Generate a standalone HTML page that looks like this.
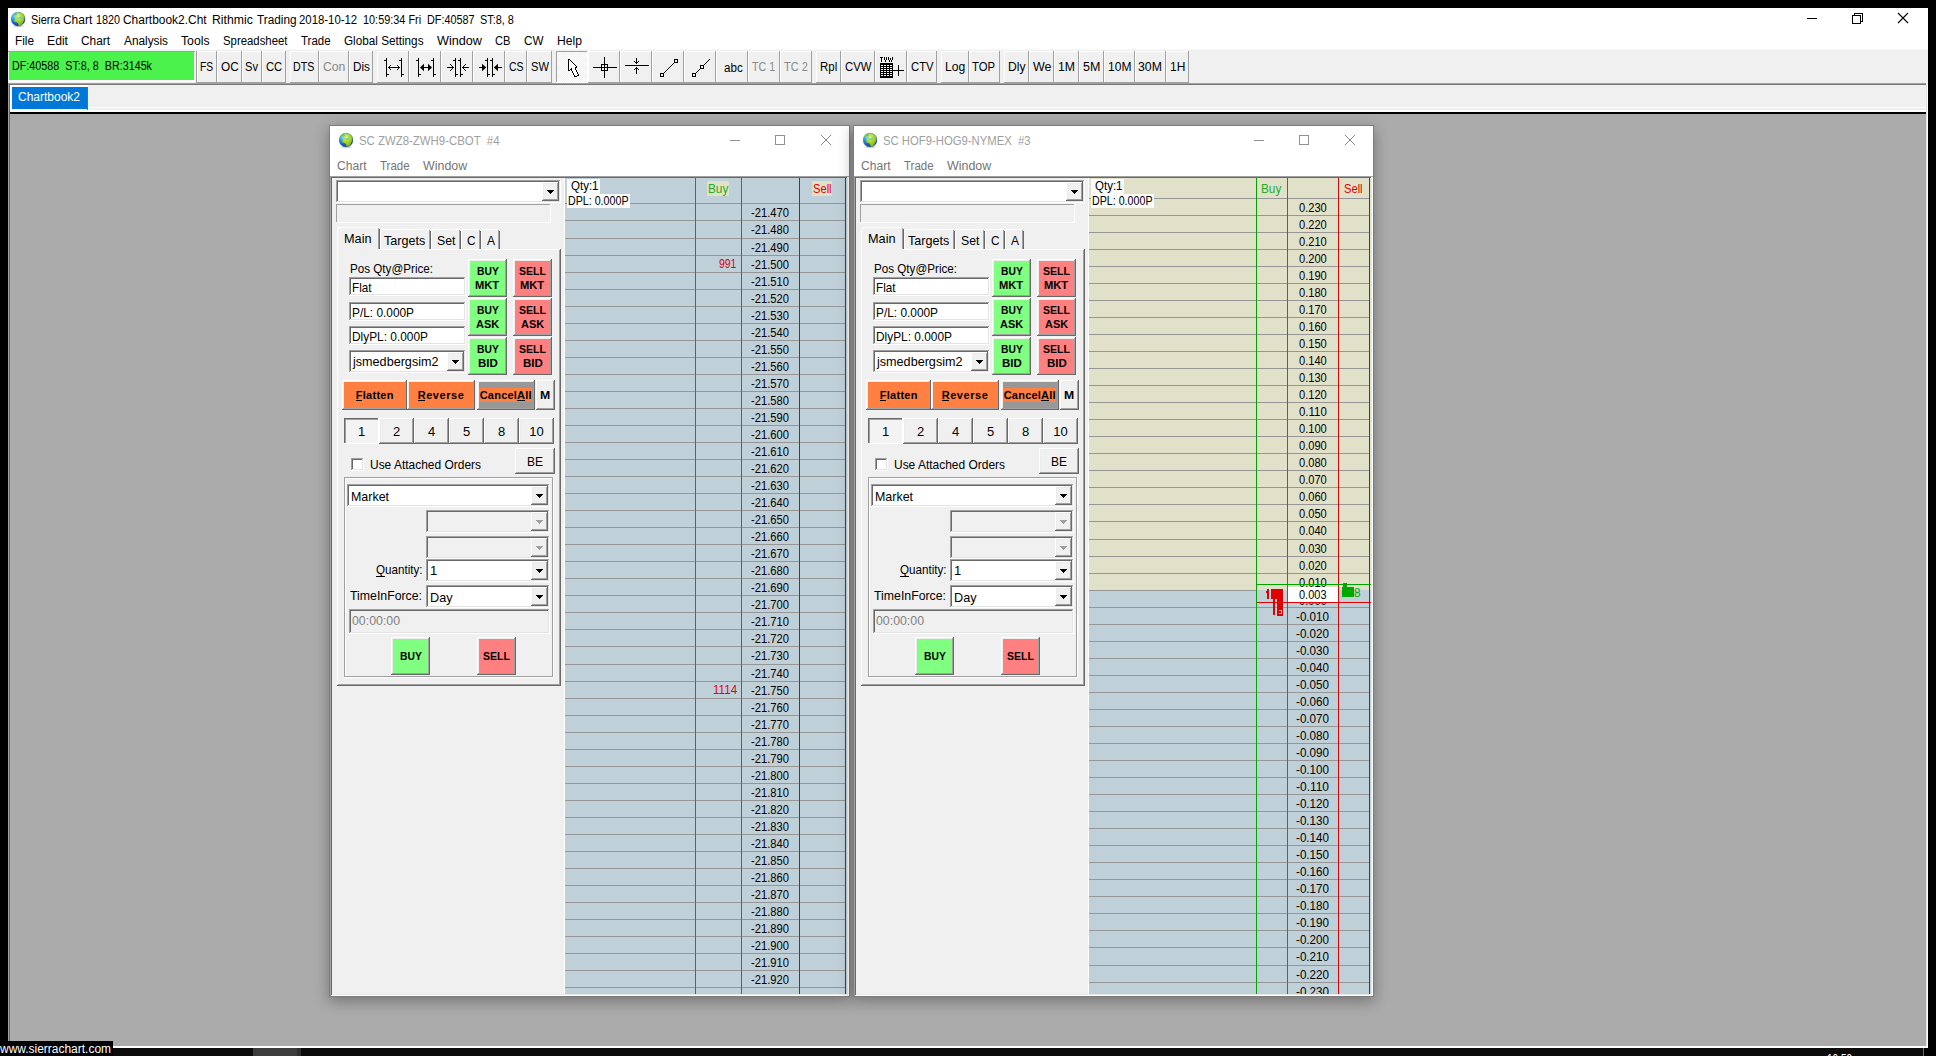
<!DOCTYPE html>
<html><head><meta charset="utf-8"><title>Sierra Chart</title>
<style>
html,body{margin:0;padding:0;}
body{width:1936px;height:1056px;background:#000;overflow:hidden;position:relative;font-family:"Liberation Sans",sans-serif;}
div,span.t,svg{position:absolute;}
span.t{white-space:nowrap;transform-origin:0 50%;line-height:normal;}
</style></head><body>
<div style="left:8px;top:8px;width:1920px;height:41px;background:#fff;"></div>
<div style="left:8px;top:49px;width:1920px;height:63px;background:#f0f0f0;"></div>
<div style="left:8px;top:49px;width:1920px;height:1px;background:#f7f7f7;"></div>
<div style="left:8px;top:83px;width:1918px;height:1px;background:#a0a0a0;"></div>
<div style="left:8px;top:84px;width:1918px;height:1px;background:#787878;"></div>
<div style="left:8px;top:107px;width:1920px;height:1px;background:#fff;"></div>
<div style="left:8px;top:110px;width:1920px;height:2px;background:#fff;"></div>
<div style="left:8px;top:112px;width:1920px;height:2px;background:#000;"></div>
<div style="left:8px;top:114px;width:1920px;height:932px;background:#ababab;"></div>
<div style="left:8px;top:83px;width:1px;height:963px;background:#a0a0a0;"></div>
<div style="left:9px;top:84px;width:1px;height:962px;background:#696969;"></div>
<div style="left:1926px;top:85px;width:1px;height:961px;background:#e3e3e3;"></div>
<div style="left:1927px;top:85px;width:1px;height:961px;background:#fff;"></div>
<div style="left:8px;top:1046px;width:1920px;height:2px;background:#fff;"></div>
<div style="left:0px;top:1048px;width:1923px;height:8px;background:#0b0b0b;"></div>
<div style="left:1923px;top:1048px;width:1px;height:8px;background:#6a6a6a;"></div>
<div style="left:253px;top:1048px;width:44px;height:8px;background:#3c3c3c;"></div>
<div style="left:297px;top:1048px;width:4px;height:8px;background:#2e2e2e;"></div>
<div style="left:0px;top:1041px;width:113px;height:15px;background:#000;"></div>
<span class="t" style="left:0.00px;top:1042px;font-size:12px;color:#fff;transform:scaleX(0.9968);">www.sierrachart.com</span>
<span class="t" style="left:1827.00px;top:1052px;font-size:12px;color:#fff;transform:scaleX(0.8325);">10:59</span>
<svg style="left:8.9px;top:9.5px" width="18.2" height="18.2" viewBox="-1.282 -1.282 2.563 2.563"><defs><radialGradient id="gb1" cx="0.3" cy="0.3" r="0.75"><stop offset="0" stop-color="#7fe0fa"/><stop offset="0.35" stop-color="#2d9ae6"/><stop offset="0.75" stop-color="#0f55b8"/><stop offset="1" stop-color="#0a3c96"/></radialGradient><radialGradient id="gl1" cx="0.38" cy="0.32" r="0.8"><stop offset="0" stop-color="#dcf870"/><stop offset="0.45" stop-color="#a4d428"/><stop offset="0.85" stop-color="#78aa18"/><stop offset="1" stop-color="#4e8410"/></radialGradient><clipPath id="gc1"><circle cx="0" cy="0" r="1"/></clipPath></defs><ellipse cx="0.05" cy="0.98" rx="0.75" ry="0.16" fill="#503030" opacity="0.22"/><circle cx="0" cy="0" r="1" fill="url(#gb1)"/><g clip-path="url(#gc1)"><path d="M-0.5 -1 L1 -1 L1 -0.25 C0.93 -0.18 0.9 -0.05 0.88 0.1 C0.8 0.3 0.72 0.45 0.55 0.75 C0.45 0.9 0.3 1 0.1 1 C0.05 0.85 0.05 0.7 -0.02 0.58 C-0.1 0.42 -0.3 0.42 -0.48 0.36 C-0.58 0.22 -0.58 0.05 -0.45 -0.1 C-0.38 -0.2 -0.42 -0.3 -0.34 -0.42 C-0.25 -0.55 -0.2 -0.62 -0.12 -0.72 C-0.25 -0.78 -0.4 -0.85 -0.5 -1Z" fill="url(#gl1)"/><path d="M-1 -0.45 C-0.85 -0.6 -0.7 -0.75 -0.55 -0.95 L-0.35 -0.85 C-0.5 -0.7 -0.7 -0.55 -0.85 -0.35Z" fill="#8cc828"/><path d="M-0.25 -0.2 C-0.1 -0.28 0.05 -0.2 0.2 -0.22 C0.22 -0.35 0.3 -0.42 0.4 -0.4 C0.44 -0.25 0.42 -0.1 0.38 0 C0.25 0.02 0.15 0.02 0.05 -0.02 C0 -0.1 -0.15 -0.1 -0.25 -0.2Z" fill="#6cc8c0" opacity="0.85"/><path d="M-0.1 -0.88 C0 -0.95 0.15 -0.95 0.2 -0.86 C0.1 -0.8 0 -0.8 -0.1 -0.88Z" fill="#48a8e8"/></g><circle cx="0" cy="0" r="1" fill="none" stroke="#1a4a9a" stroke-width="0.06" opacity="0.35"/></svg>
<span class="t" style="left:30.70px;top:13px;font-size:12px;color:#000;transform:scaleX(0.9122);">Sierra</span>
<span class="t" style="left:63.10px;top:13px;font-size:12px;color:#000;transform:scaleX(0.9951);">Chart</span>
<span class="t" style="left:95.50px;top:13px;font-size:12px;color:#000;transform:scaleX(0.8990);">1820</span>
<span class="t" style="left:122.50px;top:13px;font-size:12px;color:#000;transform:scaleX(0.9947);">Chartbook2.Cht</span>
<span class="t" style="left:211.70px;top:13px;font-size:12px;color:#000;transform:scaleX(1.0199);">Rithmic</span>
<span class="t" style="left:256.70px;top:13px;font-size:12px;color:#000;transform:scaleX(0.9815);">Trading</span>
<span class="t" style="left:299.00px;top:13px;font-size:12px;color:#000;transform:scaleX(0.9481);">2018-10-12</span>
<span class="t" style="left:362.80px;top:13px;font-size:12px;color:#000;transform:scaleX(0.9073);">10:59:34 Fri</span>
<span class="t" style="left:427.00px;top:13px;font-size:12px;color:#000;transform:scaleX(0.9032);">DF:40587</span>
<span class="t" style="left:480.40px;top:13px;font-size:12px;color:#000;transform:scaleX(0.9075);">ST:8, 8</span>
<svg style="left:1800px;top:8px" width="120" height="24" viewBox="0 0 120 24" shape-rendering="crispEdges"><path d="M7 10.5H17" stroke="#000" stroke-width="1" fill="none"/><path d="M52.5 7.5H60.5V15.5H52.5Z M54.5 7.5V5.5H62.5V13.5H60.5" stroke="#000" stroke-width="1" fill="none"/><path d="M98 5L108 15M108 5L98 15" stroke="#000" stroke-width="1.1" fill="none" shape-rendering="auto"/></svg>
<span class="t" style="left:14.50px;top:34px;font-size:12px;color:#000;transform:scaleX(0.9826);">File</span>
<span class="t" style="left:46.50px;top:34px;font-size:12px;color:#000;transform:scaleX(1.0156);">Edit</span>
<span class="t" style="left:81.00px;top:34px;font-size:12px;color:#000;transform:scaleX(0.9883);">Chart</span>
<span class="t" style="left:123.50px;top:34px;font-size:12px;color:#000;transform:scaleX(0.9847);">Analysis</span>
<span class="t" style="left:181.00px;top:34px;font-size:12px;color:#000;transform:scaleX(1.0174);">Tools</span>
<span class="t" style="left:223.00px;top:34px;font-size:12px;color:#000;transform:scaleX(0.9478);">Spreadsheet</span>
<span class="t" style="left:301.00px;top:34px;font-size:12px;color:#000;transform:scaleX(0.9546);">Trade</span>
<span class="t" style="left:344.00px;top:34px;font-size:12px;color:#000;transform:scaleX(0.9769);">Global Settings</span>
<span class="t" style="left:436.50px;top:34px;font-size:12px;color:#000;transform:scaleX(1.0544);">Window</span>
<span class="t" style="left:495.00px;top:34px;font-size:12px;color:#000;transform:scaleX(0.9298);">CB</span>
<span class="t" style="left:524.00px;top:34px;font-size:12px;color:#000;transform:scaleX(0.9754);">CW</span>
<span class="t" style="left:557.00px;top:34px;font-size:12px;color:#000;transform:scaleX(1.0130);">Help</span>
<div style="left:8px;top:51px;width:187px;height:1px;background:#a0a0a0;"></div>
<div style="left:9px;top:52px;width:185px;height:28px;background:#4cf24c;"></div>
<div style="left:8px;top:80px;width:187px;height:2px;background:#fff;"></div>
<div style="left:194px;top:52px;width:1px;height:28px;background:#fff;"></div>
<span class="t" style="left:12.00px;top:59px;font-size:12px;color:#000;transform:scaleX(0.8969);">DF:40588 &nbsp;ST:8, 8 &nbsp;BR:3145k</span>
<div style="left:196px;top:51px;width:1px;height:32px;background:#a0a0a0;"></div>
<div style="left:197px;top:51px;width:1px;height:31px;background:#fff;"></div>
<div style="left:197px;top:51px;width:20px;height:1px;background:#fff;"></div>
<div style="left:216px;top:51px;width:1px;height:32px;background:#a0a0a0;"></div>
<div style="left:197px;top:82px;width:20px;height:1px;background:#a0a0a0;"></div>
<span class="t" style="left:200.40px;top:60px;font-size:12px;color:#000;transform:scaleX(0.8543);">FS</span>
<div style="left:217px;top:51px;width:1px;height:31px;background:#fff;"></div>
<div style="left:217px;top:51px;width:25px;height:1px;background:#fff;"></div>
<div style="left:241px;top:51px;width:1px;height:32px;background:#a0a0a0;"></div>
<div style="left:217px;top:82px;width:25px;height:1px;background:#a0a0a0;"></div>
<span class="t" style="left:220.60px;top:60px;font-size:12px;color:#000;transform:scaleX(0.9833);">OC</span>
<div style="left:242px;top:51px;width:1px;height:31px;background:#fff;"></div>
<div style="left:242px;top:51px;width:20px;height:1px;background:#fff;"></div>
<div style="left:261px;top:51px;width:1px;height:32px;background:#a0a0a0;"></div>
<div style="left:242px;top:82px;width:20px;height:1px;background:#a0a0a0;"></div>
<span class="t" style="left:245.40px;top:60px;font-size:12px;color:#000;transform:scaleX(0.9283);">Sv</span>
<div style="left:262px;top:51px;width:1px;height:31px;background:#fff;"></div>
<div style="left:262px;top:51px;width:24px;height:1px;background:#fff;"></div>
<div style="left:285px;top:51px;width:1px;height:32px;background:#a0a0a0;"></div>
<div style="left:262px;top:82px;width:24px;height:1px;background:#a0a0a0;"></div>
<span class="t" style="left:266.00px;top:60px;font-size:12px;color:#000;transform:scaleX(0.9347);">CC</span>
<div style="left:290px;top:51px;width:1px;height:31px;background:#fff;"></div>
<div style="left:290px;top:51px;width:29px;height:1px;background:#fff;"></div>
<div style="left:318px;top:51px;width:1px;height:32px;background:#a0a0a0;"></div>
<div style="left:290px;top:82px;width:29px;height:1px;background:#a0a0a0;"></div>
<span class="t" style="left:293.40px;top:60px;font-size:12px;color:#000;transform:scaleX(0.8875);">DTS</span>
<div style="left:319px;top:51px;width:1px;height:31px;background:#fff;"></div>
<div style="left:319px;top:51px;width:30px;height:1px;background:#fff;"></div>
<div style="left:348px;top:51px;width:1px;height:32px;background:#a0a0a0;"></div>
<div style="left:319px;top:82px;width:30px;height:1px;background:#a0a0a0;"></div>
<span class="t" style="left:322.80px;top:60px;font-size:12px;color:#8a8a8a;transform:scaleX(1.0175);">Con</span>
<div style="left:349px;top:51px;width:1px;height:31px;background:#fff;"></div>
<div style="left:349px;top:51px;width:24px;height:1px;background:#fff;"></div>
<div style="left:372px;top:51px;width:1px;height:32px;background:#a0a0a0;"></div>
<div style="left:349px;top:82px;width:24px;height:1px;background:#a0a0a0;"></div>
<span class="t" style="left:352.80px;top:60px;font-size:12px;color:#000;transform:scaleX(0.9751);">Dis</span>
<div style="left:377px;top:51px;width:1px;height:31px;background:#fff;"></div>
<div style="left:377px;top:51px;width:32px;height:1px;background:#fff;"></div>
<div style="left:408px;top:51px;width:1px;height:32px;background:#a0a0a0;"></div>
<div style="left:377px;top:82px;width:32px;height:1px;background:#a0a0a0;"></div>
<svg style="left:377px;top:52px" width="32" height="31" viewBox="0 0 32 31" shape-rendering="crispEdges"><rect x="9" y="6" width="1" height="19" fill="#000"/><rect x="7" y="8" width="2" height="1" fill="#000"/><rect x="10" y="22" width="2" height="1" fill="#000"/><rect x="24" y="6" width="1" height="19" fill="#000"/><rect x="22" y="8" width="2" height="1" fill="#000"/><rect x="25" y="22" width="2" height="1" fill="#000"/><rect x="11" y="15" width="12" height="1" fill="#000"/><rect x="12" y="14" width="1" height="1" fill="#000"/><rect x="13" y="13" width="1" height="1" fill="#000"/><rect x="12" y="16" width="1" height="1" fill="#000"/><rect x="13" y="17" width="1" height="1" fill="#000"/><rect x="21" y="14" width="1" height="1" fill="#000"/><rect x="20" y="13" width="1" height="1" fill="#000"/><rect x="21" y="16" width="1" height="1" fill="#000"/><rect x="20" y="17" width="1" height="1" fill="#000"/></svg>
<div style="left:409px;top:51px;width:1px;height:31px;background:#fff;"></div>
<div style="left:409px;top:51px;width:32px;height:1px;background:#fff;"></div>
<div style="left:440px;top:51px;width:1px;height:32px;background:#a0a0a0;"></div>
<div style="left:409px;top:82px;width:32px;height:1px;background:#a0a0a0;"></div>
<svg style="left:409px;top:52px" width="32" height="31" viewBox="0 0 32 31" shape-rendering="crispEdges"><rect x="9" y="6" width="1" height="19" fill="#000"/><rect x="7" y="8" width="2" height="1" fill="#000"/><rect x="10" y="22" width="2" height="1" fill="#000"/><rect x="24" y="6" width="1" height="19" fill="#000"/><rect x="22" y="8" width="2" height="1" fill="#000"/><rect x="25" y="22" width="2" height="1" fill="#000"/><rect x="13" y="15" width="8" height="1" fill="#000"/><path d="M11 15.5L15 11.8V19.2Z M23 15.5L19 11.8V19.2Z" fill="#000" shape-rendering="auto"/></svg>
<div style="left:441px;top:51px;width:1px;height:31px;background:#fff;"></div>
<div style="left:441px;top:51px;width:32px;height:1px;background:#fff;"></div>
<div style="left:472px;top:51px;width:1px;height:32px;background:#a0a0a0;"></div>
<div style="left:441px;top:82px;width:32px;height:1px;background:#a0a0a0;"></div>
<svg style="left:441px;top:52px" width="32" height="31" viewBox="0 0 32 31" shape-rendering="crispEdges"><rect x="14" y="6" width="1" height="19" fill="#000"/><rect x="12" y="8" width="2" height="1" fill="#000"/><rect x="15" y="22" width="2" height="1" fill="#000"/><rect x="19" y="6" width="1" height="19" fill="#000"/><rect x="17" y="8" width="2" height="1" fill="#000"/><rect x="20" y="22" width="2" height="1" fill="#000"/><rect x="6" y="15" width="7" height="1" fill="#000"/><rect x="21" y="15" width="7" height="1" fill="#000"/><rect x="11" y="14" width="1" height="1" fill="#000"/><rect x="10" y="13" width="1" height="1" fill="#000"/><rect x="9" y="12" width="1" height="1" fill="#000"/><rect x="11" y="16" width="1" height="1" fill="#000"/><rect x="10" y="17" width="1" height="1" fill="#000"/><rect x="9" y="18" width="1" height="1" fill="#000"/><rect x="22" y="14" width="1" height="1" fill="#000"/><rect x="23" y="13" width="1" height="1" fill="#000"/><rect x="24" y="12" width="1" height="1" fill="#000"/><rect x="22" y="16" width="1" height="1" fill="#000"/><rect x="23" y="17" width="1" height="1" fill="#000"/><rect x="24" y="18" width="1" height="1" fill="#000"/></svg>
<div style="left:473px;top:51px;width:1px;height:31px;background:#fff;"></div>
<div style="left:473px;top:51px;width:32px;height:1px;background:#fff;"></div>
<div style="left:504px;top:51px;width:1px;height:32px;background:#a0a0a0;"></div>
<div style="left:473px;top:82px;width:32px;height:1px;background:#a0a0a0;"></div>
<svg style="left:473px;top:52px" width="32" height="31" viewBox="0 0 32 31" shape-rendering="crispEdges"><rect x="14" y="6" width="1" height="19" fill="#000"/><rect x="12" y="8" width="2" height="1" fill="#000"/><rect x="15" y="22" width="2" height="1" fill="#000"/><rect x="19" y="6" width="1" height="19" fill="#000"/><rect x="17" y="8" width="2" height="1" fill="#000"/><rect x="20" y="22" width="2" height="1" fill="#000"/><rect x="6" y="15" width="4" height="1" fill="#000"/><rect x="24" y="15" width="5" height="1" fill="#000"/><path d="M13.2 15.5L9 11.8V19.2Z M20.8 15.5L25 11.8V19.2Z" fill="#000" shape-rendering="auto"/></svg>
<div style="left:505px;top:51px;width:1px;height:31px;background:#fff;"></div>
<div style="left:505px;top:51px;width:22px;height:1px;background:#fff;"></div>
<div style="left:526px;top:51px;width:1px;height:32px;background:#a0a0a0;"></div>
<div style="left:505px;top:82px;width:22px;height:1px;background:#a0a0a0;"></div>
<span class="t" style="left:508.90px;top:60px;font-size:12px;color:#000;transform:scaleX(0.8758);">CS</span>
<div style="left:527px;top:51px;width:1px;height:31px;background:#fff;"></div>
<div style="left:527px;top:51px;width:25px;height:1px;background:#fff;"></div>
<div style="left:551px;top:51px;width:1px;height:32px;background:#a0a0a0;"></div>
<div style="left:527px;top:82px;width:25px;height:1px;background:#a0a0a0;"></div>
<span class="t" style="left:530.60px;top:60px;font-size:12px;color:#000;transform:scaleX(0.9260);">SW</span>
<div style="left:556px;top:51px;width:32px;height:32px;background:#f8f8f8;background-image:conic-gradient(#fff 25%,#f0f0f0 0 50%,#fff 0 75%,#f0f0f0 0);background-size:2px 2px;"></div>
<div style="left:556px;top:51px;width:32px;height:1px;background:#a0a0a0;"></div>
<div style="left:556px;top:51px;width:1px;height:32px;background:#a0a0a0;"></div>
<div style="left:587px;top:51px;width:2px;height:32px;background:#fff;"></div>
<div style="left:556px;top:82px;width:32px;height:1px;background:#fff;"></div>
<svg style="left:556px;top:52px" width="32" height="31" viewBox="0 0 32 31" shape-rendering="crispEdges"><path d="M13 8L20 15V18L22 23L18.5 24L15.5 18.5L13 18Z" fill="#fff"/><rect x="12" y="7" width="1" height="1" fill="#000"/><rect x="12" y="8" width="1" height="1" fill="#000"/><rect x="12" y="9" width="1" height="1" fill="#000"/><rect x="12" y="10" width="1" height="1" fill="#000"/><rect x="12" y="11" width="1" height="1" fill="#000"/><rect x="12" y="12" width="1" height="1" fill="#000"/><rect x="12" y="13" width="1" height="1" fill="#000"/><rect x="12" y="14" width="1" height="1" fill="#000"/><rect x="12" y="15" width="1" height="1" fill="#000"/><rect x="12" y="16" width="1" height="1" fill="#000"/><rect x="12" y="17" width="1" height="1" fill="#000"/><rect x="12" y="18" width="1" height="1" fill="#000"/><rect x="13" y="7" width="1" height="1" fill="#000"/><rect x="14" y="8" width="1" height="1" fill="#000"/><rect x="15" y="9" width="1" height="1" fill="#000"/><rect x="16" y="10" width="1" height="1" fill="#000"/><rect x="17" y="11" width="1" height="1" fill="#000"/><rect x="18" y="12" width="1" height="1" fill="#000"/><rect x="19" y="13" width="1" height="1" fill="#000"/><rect x="20" y="14" width="1" height="1" fill="#000"/><rect x="20" y="15" width="1" height="1" fill="#000"/><rect x="19" y="15" width="1" height="1" fill="#000"/><rect x="19" y="16" width="1" height="1" fill="#000"/><rect x="19" y="17" width="1" height="1" fill="#000"/><rect x="20" y="18" width="1" height="1" fill="#000"/><rect x="20" y="19" width="1" height="1" fill="#000"/><rect x="21" y="20" width="1" height="1" fill="#000"/><rect x="21" y="21" width="1" height="1" fill="#000"/><rect x="22" y="22" width="1" height="1" fill="#000"/><rect x="22" y="23" width="1" height="1" fill="#000"/><rect x="21" y="23" width="1" height="1" fill="#000"/><rect x="18" y="24" width="1" height="1" fill="#000"/><rect x="19" y="24" width="1" height="1" fill="#000"/><rect x="20" y="24" width="1" height="1" fill="#000"/><rect x="18" y="23" width="1" height="1" fill="#000"/><rect x="17" y="21" width="1" height="1" fill="#000"/><rect x="17" y="22" width="1" height="1" fill="#000"/><rect x="16" y="19" width="1" height="1" fill="#000"/><rect x="16" y="20" width="1" height="1" fill="#000"/><rect x="15" y="16" width="1" height="1" fill="#000"/><rect x="15" y="17" width="1" height="1" fill="#000"/><rect x="15" y="18" width="1" height="1" fill="#000"/><rect x="14" y="17" width="1" height="1" fill="#000"/><rect x="13" y="18" width="1" height="1" fill="#000"/></svg>
<div style="left:588px;top:51px;width:1px;height:31px;background:#fff;"></div>
<div style="left:588px;top:51px;width:32px;height:1px;background:#fff;"></div>
<div style="left:619px;top:51px;width:1px;height:32px;background:#a0a0a0;"></div>
<div style="left:588px;top:82px;width:32px;height:1px;background:#a0a0a0;"></div>
<svg style="left:588px;top:52px" width="32" height="31" viewBox="0 0 32 31" shape-rendering="crispEdges"><rect x="5" y="15" width="24" height="1" fill="#000"/><rect x="16" y="5" width="1" height="21" fill="#000"/><rect x="13.5" y="12.5" width="6" height="6" stroke="#000" fill="none"/></svg>
<div style="left:620px;top:51px;width:1px;height:31px;background:#fff;"></div>
<div style="left:620px;top:51px;width:32px;height:1px;background:#fff;"></div>
<div style="left:651px;top:51px;width:1px;height:32px;background:#a0a0a0;"></div>
<div style="left:620px;top:82px;width:32px;height:1px;background:#a0a0a0;"></div>
<svg style="left:620px;top:52px" width="32" height="31" viewBox="0 0 32 31" shape-rendering="crispEdges"><rect x="5" y="13" width="24" height="1" fill="#000"/><rect x="16" y="6" width="1" height="6" fill="#000"/><rect x="16" y="15" width="1" height="7" fill="#000"/><rect x="14" y="9" width="1" height="1" fill="#000"/><rect x="15" y="10" width="1" height="1" fill="#000"/><rect x="17" y="10" width="1" height="1" fill="#000"/><rect x="18" y="9" width="1" height="1" fill="#000"/><rect x="15" y="16" width="1" height="1" fill="#000"/><rect x="14" y="17" width="1" height="1" fill="#000"/><rect x="17" y="16" width="1" height="1" fill="#000"/><rect x="18" y="17" width="1" height="1" fill="#000"/></svg>
<div style="left:652px;top:51px;width:1px;height:31px;background:#fff;"></div>
<div style="left:652px;top:51px;width:32px;height:1px;background:#fff;"></div>
<div style="left:683px;top:51px;width:1px;height:32px;background:#a0a0a0;"></div>
<div style="left:652px;top:82px;width:32px;height:1px;background:#a0a0a0;"></div>
<svg style="left:652px;top:52px" width="32" height="31" viewBox="0 0 32 31" shape-rendering="crispEdges"><path d="M11.5 21.5L22.5 10.5" stroke="#000" fill="none" shape-rendering="auto"/><rect x="8.5" y="21.5" width="3" height="3" stroke="#000" fill="#f0f0f0"/><rect x="22.5" y="7.5" width="3" height="3" stroke="#000" fill="#f0f0f0"/></svg>
<div style="left:684px;top:51px;width:1px;height:31px;background:#fff;"></div>
<div style="left:684px;top:51px;width:32px;height:1px;background:#fff;"></div>
<div style="left:715px;top:51px;width:1px;height:32px;background:#a0a0a0;"></div>
<div style="left:684px;top:82px;width:32px;height:1px;background:#a0a0a0;"></div>
<svg style="left:684px;top:52px" width="32" height="31" viewBox="0 0 32 31" shape-rendering="crispEdges"><path d="M11.5 21.5L26 7" stroke="#000" fill="none" shape-rendering="auto"/><rect x="8.5" y="21.5" width="3" height="3" stroke="#000" fill="#f0f0f0"/><rect x="16.5" y="13.5" width="3" height="3" stroke="#000" fill="#f0f0f0"/></svg>
<div style="left:716px;top:51px;width:1px;height:31px;background:#fff;"></div>
<div style="left:716px;top:51px;width:32px;height:1px;background:#fff;"></div>
<div style="left:747px;top:51px;width:1px;height:32px;background:#a0a0a0;"></div>
<div style="left:716px;top:82px;width:32px;height:1px;background:#a0a0a0;"></div>
<span class="t" style="left:723.70px;top:61px;font-size:12px;color:#000;transform:scaleX(0.9665);">abc</span>
<div style="left:748px;top:51px;width:1px;height:31px;background:#fff;"></div>
<div style="left:748px;top:51px;width:32px;height:1px;background:#fff;"></div>
<div style="left:779px;top:51px;width:1px;height:32px;background:#a0a0a0;"></div>
<div style="left:748px;top:82px;width:32px;height:1px;background:#a0a0a0;"></div>
<span class="t" style="left:751.60px;top:60px;font-size:12px;color:#8a8a8a;transform:scaleX(0.8883);">TC 1</span>
<div style="left:780px;top:51px;width:1px;height:31px;background:#fff;"></div>
<div style="left:780px;top:51px;width:32px;height:1px;background:#fff;"></div>
<div style="left:811px;top:51px;width:1px;height:32px;background:#a0a0a0;"></div>
<div style="left:780px;top:82px;width:32px;height:1px;background:#a0a0a0;"></div>
<span class="t" style="left:783.60px;top:60px;font-size:12px;color:#8a8a8a;transform:scaleX(0.9191);">TC 2</span>
<div style="left:816px;top:51px;width:1px;height:31px;background:#fff;"></div>
<div style="left:816px;top:51px;width:25px;height:1px;background:#fff;"></div>
<div style="left:840px;top:51px;width:1px;height:32px;background:#a0a0a0;"></div>
<div style="left:816px;top:82px;width:25px;height:1px;background:#a0a0a0;"></div>
<span class="t" style="left:820.00px;top:60px;font-size:12px;color:#000;transform:scaleX(0.9552);">Rpl</span>
<div style="left:841px;top:51px;width:1px;height:31px;background:#fff;"></div>
<div style="left:841px;top:51px;width:34px;height:1px;background:#fff;"></div>
<div style="left:874px;top:51px;width:1px;height:32px;background:#a0a0a0;"></div>
<div style="left:841px;top:82px;width:34px;height:1px;background:#a0a0a0;"></div>
<span class="t" style="left:844.80px;top:60px;font-size:12px;color:#000;transform:scaleX(0.9466);">CVW</span>
<div style="left:875px;top:51px;width:1px;height:31px;background:#fff;"></div>
<div style="left:875px;top:51px;width:32px;height:1px;background:#fff;"></div>
<div style="left:906px;top:51px;width:1px;height:32px;background:#a0a0a0;"></div>
<div style="left:875px;top:82px;width:32px;height:1px;background:#a0a0a0;"></div>
<svg style="left:875px;top:52px" width="32" height="31" viewBox="0 0 32 31" shape-rendering="crispEdges"><rect x="5" y="11" width="13" height="15" fill="#000"/><rect x="6" y="13" width="2" height="1" fill="#fff"/><rect x="9" y="13" width="2" height="1" fill="#fff"/><rect x="12" y="13" width="2" height="1" fill="#fff"/><rect x="15" y="13" width="2" height="1" fill="#fff"/><rect x="6" y="15" width="2" height="1" fill="#fff"/><rect x="9" y="15" width="2" height="1" fill="#fff"/><rect x="12" y="15" width="2" height="1" fill="#fff"/><rect x="15" y="15" width="2" height="1" fill="#fff"/><rect x="6" y="17" width="2" height="1" fill="#fff"/><rect x="9" y="17" width="2" height="1" fill="#fff"/><rect x="12" y="17" width="2" height="1" fill="#fff"/><rect x="15" y="17" width="2" height="1" fill="#fff"/><rect x="6" y="19" width="2" height="1" fill="#fff"/><rect x="9" y="19" width="2" height="1" fill="#fff"/><rect x="12" y="19" width="2" height="1" fill="#fff"/><rect x="15" y="19" width="2" height="1" fill="#fff"/><rect x="6" y="21" width="2" height="1" fill="#fff"/><rect x="9" y="21" width="2" height="1" fill="#fff"/><rect x="12" y="21" width="2" height="1" fill="#fff"/><rect x="15" y="21" width="2" height="1" fill="#fff"/><rect x="6" y="23" width="2" height="1" fill="#fff"/><rect x="9" y="23" width="2" height="1" fill="#fff"/><rect x="12" y="23" width="2" height="1" fill="#fff"/><rect x="15" y="23" width="2" height="1" fill="#fff"/><rect x="18" y="18" width="11" height="1" fill="#000"/><rect x="23" y="13" width="1" height="11" fill="#000"/><rect x="5" y="5" width="3" height="1" fill="#000"/><rect x="6" y="5" width="1" height="5" fill="#000"/><rect x="9" y="5" width="1" height="3" fill="#000"/><rect x="11" y="5" width="1" height="3" fill="#000"/><rect x="10" y="8" width="1" height="2" fill="#000"/><rect x="13" y="5" width="1" height="3" fill="#000"/><rect x="17" y="5" width="1" height="3" fill="#000"/><rect x="15" y="6" width="1" height="2" fill="#000"/><rect x="14" y="8" width="1" height="2" fill="#000"/><rect x="16" y="8" width="1" height="2" fill="#000"/></svg>
<div style="left:907px;top:51px;width:1px;height:31px;background:#fff;"></div>
<div style="left:907px;top:51px;width:30px;height:1px;background:#fff;"></div>
<div style="left:936px;top:51px;width:1px;height:32px;background:#a0a0a0;"></div>
<div style="left:907px;top:82px;width:30px;height:1px;background:#a0a0a0;"></div>
<span class="t" style="left:910.70px;top:60px;font-size:12px;color:#000;transform:scaleX(0.9417);">CTV</span>
<div style="left:941px;top:51px;width:1px;height:31px;background:#fff;"></div>
<div style="left:941px;top:51px;width:28px;height:1px;background:#fff;"></div>
<div style="left:968px;top:51px;width:1px;height:32px;background:#a0a0a0;"></div>
<div style="left:941px;top:82px;width:28px;height:1px;background:#a0a0a0;"></div>
<span class="t" style="left:944.90px;top:60px;font-size:12px;color:#000;transform:scaleX(1.0139);">Log</span>
<div style="left:969px;top:51px;width:1px;height:31px;background:#fff;"></div>
<div style="left:969px;top:51px;width:31px;height:1px;background:#fff;"></div>
<div style="left:999px;top:51px;width:1px;height:32px;background:#a0a0a0;"></div>
<div style="left:969px;top:82px;width:31px;height:1px;background:#a0a0a0;"></div>
<span class="t" style="left:972.30px;top:60px;font-size:12px;color:#000;transform:scaleX(0.9366);">TOP</span>
<div style="left:1004px;top:51px;width:1px;height:31px;background:#fff;"></div>
<div style="left:1004px;top:51px;width:25px;height:1px;background:#fff;"></div>
<div style="left:1028px;top:51px;width:1px;height:32px;background:#a0a0a0;"></div>
<div style="left:1004px;top:82px;width:25px;height:1px;background:#a0a0a0;"></div>
<span class="t" style="left:1007.90px;top:60px;font-size:12px;color:#000;transform:scaleX(1.0097);">Dly</span>
<div style="left:1029px;top:51px;width:1px;height:31px;background:#fff;"></div>
<div style="left:1029px;top:51px;width:25px;height:1px;background:#fff;"></div>
<div style="left:1053px;top:51px;width:1px;height:32px;background:#a0a0a0;"></div>
<div style="left:1029px;top:82px;width:25px;height:1px;background:#a0a0a0;"></div>
<span class="t" style="left:1032.50px;top:60px;font-size:12px;color:#000;transform:scaleX(1.0403);">We</span>
<div style="left:1054px;top:51px;width:1px;height:31px;background:#fff;"></div>
<div style="left:1054px;top:51px;width:25px;height:1px;background:#fff;"></div>
<div style="left:1078px;top:51px;width:1px;height:32px;background:#a0a0a0;"></div>
<div style="left:1054px;top:82px;width:25px;height:1px;background:#a0a0a0;"></div>
<span class="t" style="left:1058.00px;top:60px;font-size:12px;color:#000;transform:scaleX(1.0198);">1M</span>
<div style="left:1079px;top:51px;width:1px;height:31px;background:#fff;"></div>
<div style="left:1079px;top:51px;width:25px;height:1px;background:#fff;"></div>
<div style="left:1103px;top:51px;width:1px;height:32px;background:#a0a0a0;"></div>
<div style="left:1079px;top:82px;width:25px;height:1px;background:#a0a0a0;"></div>
<span class="t" style="left:1083.00px;top:60px;font-size:12px;color:#000;transform:scaleX(1.0378);">5M</span>
<div style="left:1104px;top:51px;width:1px;height:31px;background:#fff;"></div>
<div style="left:1104px;top:51px;width:31px;height:1px;background:#fff;"></div>
<div style="left:1134px;top:51px;width:1px;height:32px;background:#a0a0a0;"></div>
<div style="left:1104px;top:82px;width:31px;height:1px;background:#a0a0a0;"></div>
<span class="t" style="left:1108.20px;top:60px;font-size:12px;color:#000;transform:scaleX(1.0024);">10M</span>
<div style="left:1135px;top:51px;width:1px;height:31px;background:#fff;"></div>
<div style="left:1135px;top:51px;width:31px;height:1px;background:#fff;"></div>
<div style="left:1165px;top:51px;width:1px;height:32px;background:#a0a0a0;"></div>
<div style="left:1135px;top:82px;width:31px;height:1px;background:#a0a0a0;"></div>
<span class="t" style="left:1138.40px;top:60px;font-size:12px;color:#000;transform:scaleX(1.0238);">30M</span>
<div style="left:1166px;top:51px;width:1px;height:31px;background:#fff;"></div>
<div style="left:1166px;top:51px;width:23px;height:1px;background:#fff;"></div>
<div style="left:1188px;top:51px;width:1px;height:32px;background:#a0a0a0;"></div>
<div style="left:1166px;top:82px;width:23px;height:1px;background:#a0a0a0;"></div>
<span class="t" style="left:1170.00px;top:60px;font-size:12px;color:#000;transform:scaleX(0.9974);">1H</span>
<div style="left:10px;top:85px;width:78px;height:26px;background:#fff;"></div>
<div style="left:87px;top:87px;width:1px;height:23px;background:#696969;"></div>
<div style="left:12px;top:87px;width:75px;height:22px;background:#0078d7;"></div>
<span class="t" style="left:18.20px;top:90px;font-size:12px;color:#fff;transform:scaleX(0.9994);">Chartbook2</span>
<div style="left:329px;top:125px;width:521px;height:872px;box-shadow:0 4px 14px 0 rgba(0,0,0,0.33);"></div>
<div style="left:329px;top:125px;width:521px;height:872px;background:#fff;outline:1px solid #7c7c7c;outline-offset:-1px;"></div>
<svg style="left:336.8px;top:130.5px" width="18.1" height="18.1" viewBox="-1.284 -1.284 2.567 2.567"><defs><radialGradient id="gb2" cx="0.3" cy="0.3" r="0.75"><stop offset="0" stop-color="#7fe0fa"/><stop offset="0.35" stop-color="#2d9ae6"/><stop offset="0.75" stop-color="#0f55b8"/><stop offset="1" stop-color="#0a3c96"/></radialGradient><radialGradient id="gl2" cx="0.38" cy="0.32" r="0.8"><stop offset="0" stop-color="#dcf870"/><stop offset="0.45" stop-color="#a4d428"/><stop offset="0.85" stop-color="#78aa18"/><stop offset="1" stop-color="#4e8410"/></radialGradient><clipPath id="gc2"><circle cx="0" cy="0" r="1"/></clipPath></defs><ellipse cx="0.05" cy="0.98" rx="0.75" ry="0.16" fill="#503030" opacity="0.22"/><circle cx="0" cy="0" r="1" fill="url(#gb2)"/><g clip-path="url(#gc2)"><path d="M-0.5 -1 L1 -1 L1 -0.25 C0.93 -0.18 0.9 -0.05 0.88 0.1 C0.8 0.3 0.72 0.45 0.55 0.75 C0.45 0.9 0.3 1 0.1 1 C0.05 0.85 0.05 0.7 -0.02 0.58 C-0.1 0.42 -0.3 0.42 -0.48 0.36 C-0.58 0.22 -0.58 0.05 -0.45 -0.1 C-0.38 -0.2 -0.42 -0.3 -0.34 -0.42 C-0.25 -0.55 -0.2 -0.62 -0.12 -0.72 C-0.25 -0.78 -0.4 -0.85 -0.5 -1Z" fill="url(#gl2)"/><path d="M-1 -0.45 C-0.85 -0.6 -0.7 -0.75 -0.55 -0.95 L-0.35 -0.85 C-0.5 -0.7 -0.7 -0.55 -0.85 -0.35Z" fill="#8cc828"/><path d="M-0.25 -0.2 C-0.1 -0.28 0.05 -0.2 0.2 -0.22 C0.22 -0.35 0.3 -0.42 0.4 -0.4 C0.44 -0.25 0.42 -0.1 0.38 0 C0.25 0.02 0.15 0.02 0.05 -0.02 C0 -0.1 -0.15 -0.1 -0.25 -0.2Z" fill="#6cc8c0" opacity="0.85"/><path d="M-0.1 -0.88 C0 -0.95 0.15 -0.95 0.2 -0.86 C0.1 -0.8 0 -0.8 -0.1 -0.88Z" fill="#48a8e8"/></g><circle cx="0" cy="0" r="1" fill="none" stroke="#1a4a9a" stroke-width="0.06" opacity="0.35"/></svg>
<span class="t" style="left:359.00px;top:134px;font-size:12px;color:#a0a0a0;transform:scaleX(0.9507);">SC ZWZ8-ZWH9-CBOT &nbsp;#4</span>
<svg style="left:725px;top:130px" width="115" height="20" viewBox="0 0 115 20" shape-rendering="crispEdges"><path d="M5 10.5H15" stroke="#929292" fill="none"/><rect x="50.5" y="5.5" width="9" height="9" stroke="#929292" fill="none"/><path d="M96 5L106 15M106 5L96 15" stroke="#868686" stroke-width="1" fill="none" shape-rendering="auto"/></svg>
<span class="t" style="left:337.00px;top:159px;font-size:12px;color:#747474;transform:scaleX(1.0053);">Chart</span>
<span class="t" style="left:380.20px;top:159px;font-size:12px;color:#747474;transform:scaleX(0.9546);">Trade</span>
<span class="t" style="left:422.80px;top:159px;font-size:12px;color:#747474;transform:scaleX(1.0356);">Window</span>
<div style="left:330px;top:176px;width:519px;height:1px;background:#a0a0a0;"></div>
<div style="left:330px;top:177px;width:517px;height:1px;background:#696969;"></div>
<div style="left:330px;top:176px;width:1px;height:820px;background:#a0a0a0;"></div>
<div style="left:331px;top:177px;width:1px;height:818px;background:#696969;"></div>
<div style="left:332px;top:178px;width:233px;height:816px;background:#f0f0f0;"></div>
<div style="left:564px;top:178px;width:1px;height:816px;background:#fff;"></div>
<div style="left:847px;top:177px;width:1px;height:818px;background:#e8e8e8;"></div>
<div style="left:332px;top:994px;width:516px;height:1px;background:#e8e8e8;"></div>
<div style="left:336px;top:180px;width:225px;height:23px;background:#fff;"></div>
<div style="left:336px;top:180px;width:225px;height:1px;background:#a0a0a0;"></div>
<div style="left:336px;top:180px;width:1px;height:23px;background:#a0a0a0;"></div>
<div style="left:337px;top:181px;width:223px;height:1px;background:#696969;"></div>
<div style="left:337px;top:181px;width:1px;height:21px;background:#696969;"></div>
<div style="left:336px;top:202px;width:225px;height:1px;background:#fff;"></div>
<div style="left:560px;top:180px;width:1px;height:23px;background:#fff;"></div>
<div style="left:337px;top:201px;width:223px;height:1px;background:#e3e3e3;"></div>
<div style="left:559px;top:181px;width:1px;height:21px;background:#e3e3e3;"></div>
<div style="left:542px;top:182px;width:17px;height:19px;background:#f0f0f0;"></div>
<div style="left:542px;top:182px;width:17px;height:1px;background:#fff;"></div>
<div style="left:542px;top:182px;width:1px;height:19px;background:#fff;"></div>
<div style="left:543px;top:183px;width:15px;height:1px;background:#ececec;"></div>
<div style="left:543px;top:183px;width:1px;height:17px;background:#ececec;"></div>
<div style="left:542px;top:200px;width:17px;height:1px;background:#696969;"></div>
<div style="left:558px;top:182px;width:1px;height:19px;background:#696969;"></div>
<div style="left:543px;top:199px;width:15px;height:1px;background:#a0a0a0;"></div>
<div style="left:557px;top:183px;width:1px;height:17px;background:#a0a0a0;"></div>
<svg style="left:547px;top:190px" width="7" height="4" viewBox="0 0 7 4" shape-rendering="crispEdges"><rect x="0" y="0" width="7" height="1" fill="#000"/><rect x="1" y="1" width="5" height="1" fill="#000"/><rect x="2" y="2" width="3" height="1" fill="#000"/><rect x="3" y="3" width="1" height="1" fill="#000"/></svg>
<div style="left:336px;top:204px;width:215px;height:19px;background:#f0f0f0;"></div>
<div style="left:336px;top:204px;width:215px;height:1px;background:#a0a0a0;"></div>
<div style="left:336px;top:204px;width:1px;height:19px;background:#a0a0a0;"></div>
<div style="left:336px;top:222px;width:215px;height:1px;background:#fff;"></div>
<div style="left:550px;top:204px;width:1px;height:19px;background:#fff;"></div>
<div style="left:337px;top:249px;width:224px;height:437px;background:#f0f0f0;"></div>
<div style="left:337px;top:249px;width:224px;height:1px;background:#fff;"></div>
<div style="left:337px;top:249px;width:1px;height:437px;background:#fff;"></div>
<div style="left:560px;top:249px;width:1px;height:437px;background:#696969;"></div>
<div style="left:337px;top:685px;width:224px;height:1px;background:#696969;"></div>
<div style="left:559px;top:250px;width:1px;height:435px;background:#a0a0a0;"></div>
<div style="left:338px;top:684px;width:222px;height:1px;background:#a0a0a0;"></div>
<div style="left:380px;top:230px;width:51px;height:19px;background:#f0f0f0;"></div>
<div style="left:380px;top:231px;width:1px;height:18px;background:#fff;"></div>
<div style="left:381px;top:229px;width:48px;height:1px;background:#fff;"></div>
<div style="left:381px;top:230px;width:1px;height:1px;background:#fff;"></div>
<div style="left:430px;top:231px;width:1px;height:18px;background:#696969;"></div>
<div style="left:429px;top:230px;width:1px;height:19px;background:#a0a0a0;"></div>
<span class="t" style="left:383.70px;top:233px;font-size:13px;color:#000;transform:scaleX(0.9664);">Targets</span>
<div style="left:431px;top:230px;width:30px;height:19px;background:#f0f0f0;"></div>
<div style="left:431px;top:231px;width:1px;height:18px;background:#fff;"></div>
<div style="left:432px;top:229px;width:27px;height:1px;background:#fff;"></div>
<div style="left:432px;top:230px;width:1px;height:1px;background:#fff;"></div>
<div style="left:460px;top:231px;width:1px;height:18px;background:#696969;"></div>
<div style="left:459px;top:230px;width:1px;height:19px;background:#a0a0a0;"></div>
<span class="t" style="left:437.00px;top:233px;font-size:13px;color:#000;transform:scaleX(0.9430);">Set</span>
<div style="left:461px;top:230px;width:20px;height:19px;background:#f0f0f0;"></div>
<div style="left:461px;top:231px;width:1px;height:18px;background:#fff;"></div>
<div style="left:462px;top:229px;width:17px;height:1px;background:#fff;"></div>
<div style="left:462px;top:230px;width:1px;height:1px;background:#fff;"></div>
<div style="left:480px;top:231px;width:1px;height:18px;background:#696969;"></div>
<div style="left:479px;top:230px;width:1px;height:19px;background:#a0a0a0;"></div>
<span class="t" style="left:466.80px;top:233px;font-size:13px;color:#000;transform:scaleX(0.9054);">C</span>
<div style="left:481px;top:230px;width:19px;height:19px;background:#f0f0f0;"></div>
<div style="left:481px;top:231px;width:1px;height:18px;background:#fff;"></div>
<div style="left:482px;top:229px;width:16px;height:1px;background:#fff;"></div>
<div style="left:482px;top:230px;width:1px;height:1px;background:#fff;"></div>
<div style="left:499px;top:231px;width:1px;height:18px;background:#696969;"></div>
<div style="left:498px;top:230px;width:1px;height:19px;background:#a0a0a0;"></div>
<span class="t" style="left:486.60px;top:233px;font-size:13px;color:#000;transform:scaleX(0.9226);">A</span>
<div style="left:337px;top:228px;width:43px;height:22px;background:#f0f0f0;"></div>
<div style="left:337px;top:229px;width:1px;height:21px;background:#fff;"></div>
<div style="left:338px;top:227px;width:40px;height:1px;background:#fff;"></div>
<div style="left:338px;top:228px;width:1px;height:1px;background:#fff;"></div>
<div style="left:379px;top:229px;width:1px;height:20px;background:#696969;"></div>
<div style="left:378px;top:228px;width:1px;height:21px;background:#a0a0a0;"></div>
<span class="t" style="left:343.80px;top:231px;font-size:13px;color:#000;transform:scaleX(0.9760);">Main</span>
<span class="t" style="left:349.50px;top:261px;font-size:13px;color:#000;transform:scaleX(0.8957);">Pos Qty@Price:</span>
<div style="left:349px;top:277px;width:117px;height:19px;background:#fff;"></div>
<div style="left:349px;top:277px;width:117px;height:1px;background:#a0a0a0;"></div>
<div style="left:349px;top:277px;width:1px;height:19px;background:#a0a0a0;"></div>
<div style="left:350px;top:278px;width:115px;height:1px;background:#696969;"></div>
<div style="left:350px;top:278px;width:1px;height:17px;background:#696969;"></div>
<div style="left:349px;top:295px;width:117px;height:1px;background:#fff;"></div>
<div style="left:465px;top:277px;width:1px;height:19px;background:#fff;"></div>
<div style="left:350px;top:294px;width:115px;height:1px;background:#e3e3e3;"></div>
<div style="left:464px;top:278px;width:1px;height:17px;background:#e3e3e3;"></div>
<span class="t" style="left:351.50px;top:280px;font-size:13px;color:#000;transform:scaleX(0.8998);">Flat</span>
<div style="left:349px;top:302px;width:117px;height:19px;background:#fff;"></div>
<div style="left:349px;top:302px;width:117px;height:1px;background:#a0a0a0;"></div>
<div style="left:349px;top:302px;width:1px;height:19px;background:#a0a0a0;"></div>
<div style="left:350px;top:303px;width:115px;height:1px;background:#696969;"></div>
<div style="left:350px;top:303px;width:1px;height:17px;background:#696969;"></div>
<div style="left:349px;top:320px;width:117px;height:1px;background:#fff;"></div>
<div style="left:465px;top:302px;width:1px;height:19px;background:#fff;"></div>
<div style="left:350px;top:319px;width:115px;height:1px;background:#e3e3e3;"></div>
<div style="left:464px;top:303px;width:1px;height:17px;background:#e3e3e3;"></div>
<span class="t" style="left:351.50px;top:305px;font-size:13px;color:#000;transform:scaleX(0.9126);">P/L: 0.000P</span>
<div style="left:349px;top:326px;width:117px;height:19px;background:#fff;"></div>
<div style="left:349px;top:326px;width:117px;height:1px;background:#a0a0a0;"></div>
<div style="left:349px;top:326px;width:1px;height:19px;background:#a0a0a0;"></div>
<div style="left:350px;top:327px;width:115px;height:1px;background:#696969;"></div>
<div style="left:350px;top:327px;width:1px;height:17px;background:#696969;"></div>
<div style="left:349px;top:344px;width:117px;height:1px;background:#fff;"></div>
<div style="left:465px;top:326px;width:1px;height:19px;background:#fff;"></div>
<div style="left:350px;top:343px;width:115px;height:1px;background:#e3e3e3;"></div>
<div style="left:464px;top:327px;width:1px;height:17px;background:#e3e3e3;"></div>
<span class="t" style="left:351.50px;top:329px;font-size:13px;color:#000;transform:scaleX(0.9145);">DlyPL: 0.000P</span>
<div style="left:349px;top:350px;width:117px;height:23px;background:#fff;"></div>
<div style="left:349px;top:350px;width:117px;height:1px;background:#a0a0a0;"></div>
<div style="left:349px;top:350px;width:1px;height:23px;background:#a0a0a0;"></div>
<div style="left:350px;top:351px;width:115px;height:1px;background:#696969;"></div>
<div style="left:350px;top:351px;width:1px;height:21px;background:#696969;"></div>
<div style="left:349px;top:372px;width:117px;height:1px;background:#fff;"></div>
<div style="left:465px;top:350px;width:1px;height:23px;background:#fff;"></div>
<div style="left:350px;top:371px;width:115px;height:1px;background:#e3e3e3;"></div>
<div style="left:464px;top:351px;width:1px;height:21px;background:#e3e3e3;"></div>
<div style="left:447px;top:352px;width:17px;height:19px;background:#f0f0f0;"></div>
<div style="left:447px;top:352px;width:17px;height:1px;background:#fff;"></div>
<div style="left:447px;top:352px;width:1px;height:19px;background:#fff;"></div>
<div style="left:448px;top:353px;width:15px;height:1px;background:#ececec;"></div>
<div style="left:448px;top:353px;width:1px;height:17px;background:#ececec;"></div>
<div style="left:447px;top:370px;width:17px;height:1px;background:#696969;"></div>
<div style="left:463px;top:352px;width:1px;height:19px;background:#696969;"></div>
<div style="left:448px;top:369px;width:15px;height:1px;background:#a0a0a0;"></div>
<div style="left:462px;top:353px;width:1px;height:17px;background:#a0a0a0;"></div>
<svg style="left:452px;top:360px" width="7" height="4" viewBox="0 0 7 4" shape-rendering="crispEdges"><rect x="0" y="0" width="7" height="1" fill="#000"/><rect x="1" y="1" width="5" height="1" fill="#000"/><rect x="2" y="2" width="3" height="1" fill="#000"/><rect x="3" y="3" width="1" height="1" fill="#000"/></svg>
<span class="t" style="left:353.00px;top:354px;font-size:13px;color:#000;transform:scaleX(0.9700);">jsmedbergsim2</span>
<div style="left:468px;top:259px;width:39px;height:38px;background:#80ff80;"></div>
<div style="left:468px;top:259px;width:39px;height:1px;background:#fff;"></div>
<div style="left:468px;top:259px;width:1px;height:38px;background:#fff;"></div>
<div style="left:469px;top:260px;width:37px;height:1px;background:#ececec;"></div>
<div style="left:469px;top:260px;width:1px;height:36px;background:#ececec;"></div>
<div style="left:468px;top:296px;width:39px;height:1px;background:#696969;"></div>
<div style="left:506px;top:259px;width:1px;height:38px;background:#696969;"></div>
<div style="left:469px;top:295px;width:37px;height:1px;background:#a0a0a0;"></div>
<div style="left:505px;top:260px;width:1px;height:36px;background:#a0a0a0;"></div>
<span class="t" style="left:476.60px;top:265px;font-size:11px;color:#000;font-weight:bold;transform:scaleX(0.9387);">BUY</span>
<span class="t" style="left:475.45px;top:279px;font-size:11px;color:#000;font-weight:bold;transform:scaleX(1.0115);">MKT</span>
<div style="left:513px;top:259px;width:39px;height:38px;background:#ff8080;"></div>
<div style="left:513px;top:259px;width:39px;height:1px;background:#fff;"></div>
<div style="left:513px;top:259px;width:1px;height:38px;background:#fff;"></div>
<div style="left:514px;top:260px;width:37px;height:1px;background:#ececec;"></div>
<div style="left:514px;top:260px;width:1px;height:36px;background:#ececec;"></div>
<div style="left:513px;top:296px;width:39px;height:1px;background:#696969;"></div>
<div style="left:551px;top:259px;width:1px;height:38px;background:#696969;"></div>
<div style="left:514px;top:295px;width:37px;height:1px;background:#a0a0a0;"></div>
<div style="left:550px;top:260px;width:1px;height:36px;background:#a0a0a0;"></div>
<span class="t" style="left:519.10px;top:265px;font-size:11px;color:#000;font-weight:bold;transform:scaleX(0.9533);">SELL</span>
<span class="t" style="left:520.45px;top:279px;font-size:11px;color:#000;font-weight:bold;transform:scaleX(1.0115);">MKT</span>
<div style="left:468px;top:298px;width:39px;height:38px;background:#80ff80;"></div>
<div style="left:468px;top:298px;width:39px;height:1px;background:#fff;"></div>
<div style="left:468px;top:298px;width:1px;height:38px;background:#fff;"></div>
<div style="left:469px;top:299px;width:37px;height:1px;background:#ececec;"></div>
<div style="left:469px;top:299px;width:1px;height:36px;background:#ececec;"></div>
<div style="left:468px;top:335px;width:39px;height:1px;background:#696969;"></div>
<div style="left:506px;top:298px;width:1px;height:38px;background:#696969;"></div>
<div style="left:469px;top:334px;width:37px;height:1px;background:#a0a0a0;"></div>
<div style="left:505px;top:299px;width:1px;height:36px;background:#a0a0a0;"></div>
<span class="t" style="left:476.60px;top:304px;font-size:11px;color:#000;font-weight:bold;transform:scaleX(0.9387);">BUY</span>
<span class="t" style="left:475.95px;top:318px;font-size:11px;color:#000;font-weight:bold;transform:scaleX(0.9946);">ASK</span>
<div style="left:513px;top:298px;width:39px;height:38px;background:#ff8080;"></div>
<div style="left:513px;top:298px;width:39px;height:1px;background:#fff;"></div>
<div style="left:513px;top:298px;width:1px;height:38px;background:#fff;"></div>
<div style="left:514px;top:299px;width:37px;height:1px;background:#ececec;"></div>
<div style="left:514px;top:299px;width:1px;height:36px;background:#ececec;"></div>
<div style="left:513px;top:335px;width:39px;height:1px;background:#696969;"></div>
<div style="left:551px;top:298px;width:1px;height:38px;background:#696969;"></div>
<div style="left:514px;top:334px;width:37px;height:1px;background:#a0a0a0;"></div>
<div style="left:550px;top:299px;width:1px;height:36px;background:#a0a0a0;"></div>
<span class="t" style="left:519.10px;top:304px;font-size:11px;color:#000;font-weight:bold;transform:scaleX(0.9533);">SELL</span>
<span class="t" style="left:520.95px;top:318px;font-size:11px;color:#000;font-weight:bold;transform:scaleX(0.9946);">ASK</span>
<div style="left:468px;top:337px;width:39px;height:38px;background:#80ff80;"></div>
<div style="left:468px;top:337px;width:39px;height:1px;background:#fff;"></div>
<div style="left:468px;top:337px;width:1px;height:38px;background:#fff;"></div>
<div style="left:469px;top:338px;width:37px;height:1px;background:#ececec;"></div>
<div style="left:469px;top:338px;width:1px;height:36px;background:#ececec;"></div>
<div style="left:468px;top:374px;width:39px;height:1px;background:#696969;"></div>
<div style="left:506px;top:337px;width:1px;height:38px;background:#696969;"></div>
<div style="left:469px;top:373px;width:37px;height:1px;background:#a0a0a0;"></div>
<div style="left:505px;top:338px;width:1px;height:36px;background:#a0a0a0;"></div>
<span class="t" style="left:476.60px;top:343px;font-size:11px;color:#000;font-weight:bold;transform:scaleX(0.9387);">BUY</span>
<span class="t" style="left:477.60px;top:357px;font-size:11px;color:#000;font-weight:bold;transform:scaleX(1.0452);">BID</span>
<div style="left:513px;top:337px;width:39px;height:38px;background:#ff8080;"></div>
<div style="left:513px;top:337px;width:39px;height:1px;background:#fff;"></div>
<div style="left:513px;top:337px;width:1px;height:38px;background:#fff;"></div>
<div style="left:514px;top:338px;width:37px;height:1px;background:#ececec;"></div>
<div style="left:514px;top:338px;width:1px;height:36px;background:#ececec;"></div>
<div style="left:513px;top:374px;width:39px;height:1px;background:#696969;"></div>
<div style="left:551px;top:337px;width:1px;height:38px;background:#696969;"></div>
<div style="left:514px;top:373px;width:37px;height:1px;background:#a0a0a0;"></div>
<div style="left:550px;top:338px;width:1px;height:36px;background:#a0a0a0;"></div>
<span class="t" style="left:519.10px;top:343px;font-size:11px;color:#000;font-weight:bold;transform:scaleX(0.9533);">SELL</span>
<span class="t" style="left:522.60px;top:357px;font-size:11px;color:#000;font-weight:bold;transform:scaleX(1.0452);">BID</span>
<div style="left:342px;top:380px;width:65px;height:30px;background:#ff8040;"></div>
<div style="left:342px;top:380px;width:65px;height:1px;background:#fff;"></div>
<div style="left:342px;top:380px;width:1px;height:30px;background:#fff;"></div>
<div style="left:343px;top:381px;width:63px;height:1px;background:#ececec;"></div>
<div style="left:343px;top:381px;width:1px;height:28px;background:#ececec;"></div>
<div style="left:342px;top:409px;width:65px;height:1px;background:#696969;"></div>
<div style="left:406px;top:380px;width:1px;height:30px;background:#696969;"></div>
<div style="left:343px;top:408px;width:63px;height:1px;background:#a0a0a0;"></div>
<div style="left:405px;top:381px;width:1px;height:28px;background:#a0a0a0;"></div>
<div style="left:407px;top:380px;width:68px;height:30px;background:#ff8040;"></div>
<div style="left:407px;top:380px;width:68px;height:1px;background:#fff;"></div>
<div style="left:407px;top:380px;width:1px;height:30px;background:#fff;"></div>
<div style="left:408px;top:381px;width:66px;height:1px;background:#ececec;"></div>
<div style="left:408px;top:381px;width:1px;height:28px;background:#ececec;"></div>
<div style="left:407px;top:409px;width:68px;height:1px;background:#696969;"></div>
<div style="left:474px;top:380px;width:1px;height:30px;background:#696969;"></div>
<div style="left:408px;top:408px;width:66px;height:1px;background:#a0a0a0;"></div>
<div style="left:473px;top:381px;width:1px;height:28px;background:#a0a0a0;"></div>
<div style="left:477px;top:380px;width:58px;height:30px;background:#989898;"></div>
<div style="left:477px;top:380px;width:58px;height:1px;background:#fff;"></div>
<div style="left:477px;top:380px;width:1px;height:30px;background:#fff;"></div>
<div style="left:478px;top:381px;width:56px;height:1px;background:#ececec;"></div>
<div style="left:478px;top:381px;width:1px;height:28px;background:#ececec;"></div>
<div style="left:477px;top:409px;width:58px;height:1px;background:#696969;"></div>
<div style="left:534px;top:380px;width:1px;height:30px;background:#696969;"></div>
<div style="left:478px;top:408px;width:56px;height:1px;background:#a0a0a0;"></div>
<div style="left:533px;top:381px;width:1px;height:28px;background:#a0a0a0;"></div>
<div style="left:479px;top:388px;width:53px;height:14px;background:#ff8040;"></div>
<div style="left:536px;top:380px;width:19px;height:30px;background:#f0f0f0;"></div>
<div style="left:536px;top:380px;width:19px;height:1px;background:#fff;"></div>
<div style="left:536px;top:380px;width:1px;height:30px;background:#fff;"></div>
<div style="left:537px;top:381px;width:17px;height:1px;background:#ececec;"></div>
<div style="left:537px;top:381px;width:1px;height:28px;background:#ececec;"></div>
<div style="left:536px;top:409px;width:19px;height:1px;background:#696969;"></div>
<div style="left:554px;top:380px;width:1px;height:30px;background:#696969;"></div>
<div style="left:537px;top:408px;width:17px;height:1px;background:#a0a0a0;"></div>
<div style="left:553px;top:381px;width:1px;height:28px;background:#a0a0a0;"></div>
<span class="t" style="left:355.70px;top:389px;font-size:11px;color:#000;font-weight:bold;letter-spacing:0.292px;">Flatten</span>
<div style="left:356px;top:400px;width:6px;height:1px;background:#000;"></div>
<span class="t" style="left:417.70px;top:389px;font-size:11px;color:#000;font-weight:bold;letter-spacing:0.541px;">Reverse</span>
<div style="left:418px;top:400px;width:7px;height:1px;background:#000;"></div>
<span class="t" style="left:479.70px;top:389px;font-size:11px;color:#000;font-weight:bold;letter-spacing:0.219px;">CancelAll</span>
<div style="left:517px;top:400px;width:7.5px;height:1px;background:#000;"></div>
<span class="t" style="left:540.00px;top:389px;font-size:11px;color:#000;font-weight:bold;transform:scaleX(1.1132);">M</span>
<div style="left:344px;top:418px;width:35px;height:26px;background:#f3f3f3;"></div>
<div style="left:344px;top:418px;width:35px;height:1px;background:#696969;"></div>
<div style="left:344px;top:418px;width:1px;height:26px;background:#696969;"></div>
<div style="left:345px;top:419px;width:33px;height:1px;background:#a0a0a0;"></div>
<div style="left:345px;top:419px;width:1px;height:24px;background:#a0a0a0;"></div>
<div style="left:344px;top:443px;width:35px;height:1px;background:#fff;"></div>
<div style="left:378px;top:418px;width:1px;height:26px;background:#fff;"></div>
<span class="t" style="left:357.88px;top:424px;font-size:13px;color:#000;">1</span>
<div style="left:379px;top:418px;width:35px;height:26px;background:#f0f0f0;"></div>
<div style="left:379px;top:418px;width:35px;height:1px;background:#fff;"></div>
<div style="left:379px;top:418px;width:1px;height:26px;background:#fff;"></div>
<div style="left:380px;top:419px;width:33px;height:1px;background:#ececec;"></div>
<div style="left:380px;top:419px;width:1px;height:24px;background:#ececec;"></div>
<div style="left:379px;top:443px;width:35px;height:1px;background:#696969;"></div>
<div style="left:413px;top:418px;width:1px;height:26px;background:#696969;"></div>
<div style="left:380px;top:442px;width:33px;height:1px;background:#a0a0a0;"></div>
<div style="left:412px;top:419px;width:1px;height:24px;background:#a0a0a0;"></div>
<span class="t" style="left:392.88px;top:424px;font-size:13px;color:#000;">2</span>
<div style="left:414px;top:418px;width:35px;height:26px;background:#f0f0f0;"></div>
<div style="left:414px;top:418px;width:35px;height:1px;background:#fff;"></div>
<div style="left:414px;top:418px;width:1px;height:26px;background:#fff;"></div>
<div style="left:415px;top:419px;width:33px;height:1px;background:#ececec;"></div>
<div style="left:415px;top:419px;width:1px;height:24px;background:#ececec;"></div>
<div style="left:414px;top:443px;width:35px;height:1px;background:#696969;"></div>
<div style="left:448px;top:418px;width:1px;height:26px;background:#696969;"></div>
<div style="left:415px;top:442px;width:33px;height:1px;background:#a0a0a0;"></div>
<div style="left:447px;top:419px;width:1px;height:24px;background:#a0a0a0;"></div>
<span class="t" style="left:427.88px;top:424px;font-size:13px;color:#000;">4</span>
<div style="left:449px;top:418px;width:35px;height:26px;background:#f0f0f0;"></div>
<div style="left:449px;top:418px;width:35px;height:1px;background:#fff;"></div>
<div style="left:449px;top:418px;width:1px;height:26px;background:#fff;"></div>
<div style="left:450px;top:419px;width:33px;height:1px;background:#ececec;"></div>
<div style="left:450px;top:419px;width:1px;height:24px;background:#ececec;"></div>
<div style="left:449px;top:443px;width:35px;height:1px;background:#696969;"></div>
<div style="left:483px;top:418px;width:1px;height:26px;background:#696969;"></div>
<div style="left:450px;top:442px;width:33px;height:1px;background:#a0a0a0;"></div>
<div style="left:482px;top:419px;width:1px;height:24px;background:#a0a0a0;"></div>
<span class="t" style="left:462.88px;top:424px;font-size:13px;color:#000;">5</span>
<div style="left:484px;top:418px;width:35px;height:26px;background:#f0f0f0;"></div>
<div style="left:484px;top:418px;width:35px;height:1px;background:#fff;"></div>
<div style="left:484px;top:418px;width:1px;height:26px;background:#fff;"></div>
<div style="left:485px;top:419px;width:33px;height:1px;background:#ececec;"></div>
<div style="left:485px;top:419px;width:1px;height:24px;background:#ececec;"></div>
<div style="left:484px;top:443px;width:35px;height:1px;background:#696969;"></div>
<div style="left:518px;top:418px;width:1px;height:26px;background:#696969;"></div>
<div style="left:485px;top:442px;width:33px;height:1px;background:#a0a0a0;"></div>
<div style="left:517px;top:419px;width:1px;height:24px;background:#a0a0a0;"></div>
<span class="t" style="left:497.88px;top:424px;font-size:13px;color:#000;">8</span>
<div style="left:519px;top:418px;width:35px;height:26px;background:#f0f0f0;"></div>
<div style="left:519px;top:418px;width:35px;height:1px;background:#fff;"></div>
<div style="left:519px;top:418px;width:1px;height:26px;background:#fff;"></div>
<div style="left:520px;top:419px;width:33px;height:1px;background:#ececec;"></div>
<div style="left:520px;top:419px;width:1px;height:24px;background:#ececec;"></div>
<div style="left:519px;top:443px;width:35px;height:1px;background:#696969;"></div>
<div style="left:553px;top:418px;width:1px;height:26px;background:#696969;"></div>
<div style="left:520px;top:442px;width:33px;height:1px;background:#a0a0a0;"></div>
<div style="left:552px;top:419px;width:1px;height:24px;background:#a0a0a0;"></div>
<span class="t" style="left:529.27px;top:424px;font-size:13px;color:#000;">10</span>
<div style="left:351px;top:458px;width:13px;height:13px;background:#fff;"></div>
<div style="left:351px;top:458px;width:13px;height:1px;background:#a0a0a0;"></div>
<div style="left:351px;top:458px;width:1px;height:13px;background:#a0a0a0;"></div>
<div style="left:352px;top:459px;width:11px;height:1px;background:#696969;"></div>
<div style="left:352px;top:459px;width:1px;height:11px;background:#696969;"></div>
<div style="left:351px;top:470px;width:13px;height:1px;background:#fff;"></div>
<div style="left:363px;top:458px;width:1px;height:13px;background:#fff;"></div>
<div style="left:352px;top:469px;width:11px;height:1px;background:#e3e3e3;"></div>
<div style="left:362px;top:459px;width:1px;height:11px;background:#e3e3e3;"></div>
<span class="t" style="left:369.50px;top:457px;font-size:13px;color:#000;transform:scaleX(0.9199);">Use Attached Orders</span>
<div style="left:515px;top:448px;width:40px;height:26px;background:#f0f0f0;"></div>
<div style="left:515px;top:448px;width:40px;height:1px;background:#fff;"></div>
<div style="left:515px;top:448px;width:1px;height:26px;background:#fff;"></div>
<div style="left:516px;top:449px;width:38px;height:1px;background:#ececec;"></div>
<div style="left:516px;top:449px;width:1px;height:24px;background:#ececec;"></div>
<div style="left:515px;top:473px;width:40px;height:1px;background:#696969;"></div>
<div style="left:554px;top:448px;width:1px;height:26px;background:#696969;"></div>
<div style="left:516px;top:472px;width:38px;height:1px;background:#a0a0a0;"></div>
<div style="left:553px;top:449px;width:1px;height:24px;background:#a0a0a0;"></div>
<span class="t" style="left:526.50px;top:454px;font-size:13px;color:#000;transform:scaleX(0.9226);">BE</span>
<div style="left:344px;top:477px;width:210px;height:1px;background:#a0a0a0;"></div>
<div style="left:344px;top:477px;width:1px;height:201px;background:#a0a0a0;"></div>
<div style="left:553px;top:477px;width:1px;height:201px;background:#fff;"></div>
<div style="left:344px;top:677px;width:210px;height:1px;background:#fff;"></div>
<div style="left:345px;top:478px;width:208px;height:1px;background:#fff;"></div>
<div style="left:345px;top:478px;width:1px;height:199px;background:#fff;"></div>
<div style="left:552px;top:478px;width:1px;height:199px;background:#a0a0a0;"></div>
<div style="left:345px;top:676px;width:208px;height:1px;background:#a0a0a0;"></div>
<div style="left:347px;top:484px;width:203px;height:23px;background:#fff;"></div>
<div style="left:347px;top:484px;width:203px;height:1px;background:#a0a0a0;"></div>
<div style="left:347px;top:484px;width:1px;height:23px;background:#a0a0a0;"></div>
<div style="left:348px;top:485px;width:201px;height:1px;background:#696969;"></div>
<div style="left:348px;top:485px;width:1px;height:21px;background:#696969;"></div>
<div style="left:347px;top:506px;width:203px;height:1px;background:#fff;"></div>
<div style="left:549px;top:484px;width:1px;height:23px;background:#fff;"></div>
<div style="left:348px;top:505px;width:201px;height:1px;background:#e3e3e3;"></div>
<div style="left:548px;top:485px;width:1px;height:21px;background:#e3e3e3;"></div>
<div style="left:531px;top:486px;width:17px;height:19px;background:#f0f0f0;"></div>
<div style="left:531px;top:486px;width:17px;height:1px;background:#fff;"></div>
<div style="left:531px;top:486px;width:1px;height:19px;background:#fff;"></div>
<div style="left:532px;top:487px;width:15px;height:1px;background:#ececec;"></div>
<div style="left:532px;top:487px;width:1px;height:17px;background:#ececec;"></div>
<div style="left:531px;top:504px;width:17px;height:1px;background:#696969;"></div>
<div style="left:547px;top:486px;width:1px;height:19px;background:#696969;"></div>
<div style="left:532px;top:503px;width:15px;height:1px;background:#a0a0a0;"></div>
<div style="left:546px;top:487px;width:1px;height:17px;background:#a0a0a0;"></div>
<svg style="left:536px;top:494px" width="7" height="4" viewBox="0 0 7 4" shape-rendering="crispEdges"><rect x="0" y="0" width="7" height="1" fill="#000"/><rect x="1" y="1" width="5" height="1" fill="#000"/><rect x="2" y="2" width="3" height="1" fill="#000"/><rect x="3" y="3" width="1" height="1" fill="#000"/></svg>
<span class="t" style="left:351.00px;top:489px;font-size:13px;color:#000;transform:scaleX(0.9565);">Market</span>
<div style="left:426px;top:510px;width:124px;height:23px;background:#f0f0f0;"></div>
<div style="left:426px;top:510px;width:124px;height:1px;background:#a0a0a0;"></div>
<div style="left:426px;top:510px;width:1px;height:23px;background:#a0a0a0;"></div>
<div style="left:427px;top:511px;width:122px;height:1px;background:#696969;"></div>
<div style="left:427px;top:511px;width:1px;height:21px;background:#696969;"></div>
<div style="left:426px;top:532px;width:124px;height:1px;background:#fff;"></div>
<div style="left:549px;top:510px;width:1px;height:23px;background:#fff;"></div>
<div style="left:427px;top:531px;width:122px;height:1px;background:#e3e3e3;"></div>
<div style="left:548px;top:511px;width:1px;height:21px;background:#e3e3e3;"></div>
<div style="left:531px;top:512px;width:17px;height:19px;background:#f0f0f0;"></div>
<div style="left:531px;top:512px;width:17px;height:1px;background:#fff;"></div>
<div style="left:531px;top:512px;width:1px;height:19px;background:#fff;"></div>
<div style="left:532px;top:513px;width:15px;height:1px;background:#ececec;"></div>
<div style="left:532px;top:513px;width:1px;height:17px;background:#ececec;"></div>
<div style="left:531px;top:530px;width:17px;height:1px;background:#696969;"></div>
<div style="left:547px;top:512px;width:1px;height:19px;background:#696969;"></div>
<div style="left:532px;top:529px;width:15px;height:1px;background:#a0a0a0;"></div>
<div style="left:546px;top:513px;width:1px;height:17px;background:#a0a0a0;"></div>
<svg style="left:536px;top:520px" width="7" height="4" viewBox="0 0 7 4" shape-rendering="crispEdges"><rect x="0" y="0" width="7" height="1" fill="#a0a0a0"/><rect x="1" y="1" width="5" height="1" fill="#a0a0a0"/><rect x="2" y="2" width="3" height="1" fill="#a0a0a0"/><rect x="3" y="3" width="1" height="1" fill="#a0a0a0"/></svg>
<div style="left:426px;top:536px;width:124px;height:23px;background:#f0f0f0;"></div>
<div style="left:426px;top:536px;width:124px;height:1px;background:#a0a0a0;"></div>
<div style="left:426px;top:536px;width:1px;height:23px;background:#a0a0a0;"></div>
<div style="left:427px;top:537px;width:122px;height:1px;background:#696969;"></div>
<div style="left:427px;top:537px;width:1px;height:21px;background:#696969;"></div>
<div style="left:426px;top:558px;width:124px;height:1px;background:#fff;"></div>
<div style="left:549px;top:536px;width:1px;height:23px;background:#fff;"></div>
<div style="left:427px;top:557px;width:122px;height:1px;background:#e3e3e3;"></div>
<div style="left:548px;top:537px;width:1px;height:21px;background:#e3e3e3;"></div>
<div style="left:531px;top:538px;width:17px;height:19px;background:#f0f0f0;"></div>
<div style="left:531px;top:538px;width:17px;height:1px;background:#fff;"></div>
<div style="left:531px;top:538px;width:1px;height:19px;background:#fff;"></div>
<div style="left:532px;top:539px;width:15px;height:1px;background:#ececec;"></div>
<div style="left:532px;top:539px;width:1px;height:17px;background:#ececec;"></div>
<div style="left:531px;top:556px;width:17px;height:1px;background:#696969;"></div>
<div style="left:547px;top:538px;width:1px;height:19px;background:#696969;"></div>
<div style="left:532px;top:555px;width:15px;height:1px;background:#a0a0a0;"></div>
<div style="left:546px;top:539px;width:1px;height:17px;background:#a0a0a0;"></div>
<svg style="left:536px;top:546px" width="7" height="4" viewBox="0 0 7 4" shape-rendering="crispEdges"><rect x="0" y="0" width="7" height="1" fill="#a0a0a0"/><rect x="1" y="1" width="5" height="1" fill="#a0a0a0"/><rect x="2" y="2" width="3" height="1" fill="#a0a0a0"/><rect x="3" y="3" width="1" height="1" fill="#a0a0a0"/></svg>
<div style="left:426px;top:559px;width:124px;height:23px;background:#fff;"></div>
<div style="left:426px;top:559px;width:124px;height:1px;background:#a0a0a0;"></div>
<div style="left:426px;top:559px;width:1px;height:23px;background:#a0a0a0;"></div>
<div style="left:427px;top:560px;width:122px;height:1px;background:#696969;"></div>
<div style="left:427px;top:560px;width:1px;height:21px;background:#696969;"></div>
<div style="left:426px;top:581px;width:124px;height:1px;background:#fff;"></div>
<div style="left:549px;top:559px;width:1px;height:23px;background:#fff;"></div>
<div style="left:427px;top:580px;width:122px;height:1px;background:#e3e3e3;"></div>
<div style="left:548px;top:560px;width:1px;height:21px;background:#e3e3e3;"></div>
<div style="left:531px;top:561px;width:17px;height:19px;background:#f0f0f0;"></div>
<div style="left:531px;top:561px;width:17px;height:1px;background:#fff;"></div>
<div style="left:531px;top:561px;width:1px;height:19px;background:#fff;"></div>
<div style="left:532px;top:562px;width:15px;height:1px;background:#ececec;"></div>
<div style="left:532px;top:562px;width:1px;height:17px;background:#ececec;"></div>
<div style="left:531px;top:579px;width:17px;height:1px;background:#696969;"></div>
<div style="left:547px;top:561px;width:1px;height:19px;background:#696969;"></div>
<div style="left:532px;top:578px;width:15px;height:1px;background:#a0a0a0;"></div>
<div style="left:546px;top:562px;width:1px;height:17px;background:#a0a0a0;"></div>
<svg style="left:536px;top:569px" width="7" height="4" viewBox="0 0 7 4" shape-rendering="crispEdges"><rect x="0" y="0" width="7" height="1" fill="#000"/><rect x="1" y="1" width="5" height="1" fill="#000"/><rect x="2" y="2" width="3" height="1" fill="#000"/><rect x="3" y="3" width="1" height="1" fill="#000"/></svg>
<span class="t" style="left:430.00px;top:563px;font-size:13px;color:#000;">1</span>
<div style="left:426px;top:585px;width:124px;height:23px;background:#fff;"></div>
<div style="left:426px;top:585px;width:124px;height:1px;background:#a0a0a0;"></div>
<div style="left:426px;top:585px;width:1px;height:23px;background:#a0a0a0;"></div>
<div style="left:427px;top:586px;width:122px;height:1px;background:#696969;"></div>
<div style="left:427px;top:586px;width:1px;height:21px;background:#696969;"></div>
<div style="left:426px;top:607px;width:124px;height:1px;background:#fff;"></div>
<div style="left:549px;top:585px;width:1px;height:23px;background:#fff;"></div>
<div style="left:427px;top:606px;width:122px;height:1px;background:#e3e3e3;"></div>
<div style="left:548px;top:586px;width:1px;height:21px;background:#e3e3e3;"></div>
<div style="left:531px;top:587px;width:17px;height:19px;background:#f0f0f0;"></div>
<div style="left:531px;top:587px;width:17px;height:1px;background:#fff;"></div>
<div style="left:531px;top:587px;width:1px;height:19px;background:#fff;"></div>
<div style="left:532px;top:588px;width:15px;height:1px;background:#ececec;"></div>
<div style="left:532px;top:588px;width:1px;height:17px;background:#ececec;"></div>
<div style="left:531px;top:605px;width:17px;height:1px;background:#696969;"></div>
<div style="left:547px;top:587px;width:1px;height:19px;background:#696969;"></div>
<div style="left:532px;top:604px;width:15px;height:1px;background:#a0a0a0;"></div>
<div style="left:546px;top:588px;width:1px;height:17px;background:#a0a0a0;"></div>
<svg style="left:536px;top:595px" width="7" height="4" viewBox="0 0 7 4" shape-rendering="crispEdges"><rect x="0" y="0" width="7" height="1" fill="#000"/><rect x="1" y="1" width="5" height="1" fill="#000"/><rect x="2" y="2" width="3" height="1" fill="#000"/><rect x="3" y="3" width="1" height="1" fill="#000"/></svg>
<span class="t" style="left:430.00px;top:590px;font-size:13px;color:#000;transform:scaleX(0.9733);">Day</span>
<span class="t" style="left:376.00px;top:562px;font-size:13px;color:#000;transform:scaleX(0.8938);">Quantity:</span>
<div style="left:376px;top:576px;width:9px;height:1px;background:#000;"></div>
<span class="t" style="left:350.00px;top:588px;font-size:13px;color:#000;transform:scaleX(0.9463);">TimeInForce:</span>
<div style="left:349px;top:609px;width:201px;height:25px;background:#f0f0f0;"></div>
<div style="left:349px;top:609px;width:201px;height:1px;background:#a0a0a0;"></div>
<div style="left:349px;top:609px;width:1px;height:25px;background:#a0a0a0;"></div>
<div style="left:350px;top:610px;width:199px;height:1px;background:#696969;"></div>
<div style="left:350px;top:610px;width:1px;height:23px;background:#696969;"></div>
<div style="left:349px;top:633px;width:201px;height:1px;background:#fff;"></div>
<div style="left:549px;top:609px;width:1px;height:25px;background:#fff;"></div>
<div style="left:350px;top:632px;width:199px;height:1px;background:#e3e3e3;"></div>
<div style="left:548px;top:610px;width:1px;height:23px;background:#e3e3e3;"></div>
<span class="t" style="left:352.00px;top:613px;font-size:13px;color:#808080;transform:scaleX(0.9485);">00:00:00</span>
<div style="left:391px;top:637px;width:39px;height:38px;background:#80ff80;"></div>
<div style="left:391px;top:637px;width:39px;height:1px;background:#fff;"></div>
<div style="left:391px;top:637px;width:1px;height:38px;background:#fff;"></div>
<div style="left:392px;top:638px;width:37px;height:1px;background:#ececec;"></div>
<div style="left:392px;top:638px;width:1px;height:36px;background:#ececec;"></div>
<div style="left:391px;top:674px;width:39px;height:1px;background:#696969;"></div>
<div style="left:429px;top:637px;width:1px;height:38px;background:#696969;"></div>
<div style="left:392px;top:673px;width:37px;height:1px;background:#a0a0a0;"></div>
<div style="left:428px;top:638px;width:1px;height:36px;background:#a0a0a0;"></div>
<span class="t" style="left:399.60px;top:650px;font-size:11px;color:#000;font-weight:bold;transform:scaleX(0.9387);">BUY</span>
<div style="left:477px;top:637px;width:39px;height:38px;background:#ff8080;"></div>
<div style="left:477px;top:637px;width:39px;height:1px;background:#fff;"></div>
<div style="left:477px;top:637px;width:1px;height:38px;background:#fff;"></div>
<div style="left:478px;top:638px;width:37px;height:1px;background:#ececec;"></div>
<div style="left:478px;top:638px;width:1px;height:36px;background:#ececec;"></div>
<div style="left:477px;top:674px;width:39px;height:1px;background:#696969;"></div>
<div style="left:515px;top:637px;width:1px;height:38px;background:#696969;"></div>
<div style="left:478px;top:673px;width:37px;height:1px;background:#a0a0a0;"></div>
<div style="left:514px;top:638px;width:1px;height:36px;background:#a0a0a0;"></div>
<span class="t" style="left:483.10px;top:650px;font-size:11px;color:#000;font-weight:bold;transform:scaleX(0.9533);">SELL</span>
<div style="left:565px;top:178px;width:282px;height:816px;background:#c0d0d8;"></div>
<div style="left:565px;top:203px;width:280px;height:1px;background:#969696;"></div>
<div style="left:565px;top:220px;width:280px;height:1px;background:#969696;"></div>
<div style="left:565px;top:238px;width:280px;height:1px;background:#969696;"></div>
<div style="left:565px;top:255px;width:280px;height:1px;background:#969696;"></div>
<div style="left:565px;top:272px;width:280px;height:1px;background:#969696;"></div>
<div style="left:565px;top:289px;width:280px;height:1px;background:#969696;"></div>
<div style="left:565px;top:306px;width:280px;height:1px;background:#969696;"></div>
<div style="left:565px;top:323px;width:280px;height:1px;background:#969696;"></div>
<div style="left:565px;top:340px;width:280px;height:1px;background:#969696;"></div>
<div style="left:565px;top:357px;width:280px;height:1px;background:#969696;"></div>
<div style="left:565px;top:374px;width:280px;height:1px;background:#969696;"></div>
<div style="left:565px;top:391px;width:280px;height:1px;background:#969696;"></div>
<div style="left:565px;top:408px;width:280px;height:1px;background:#969696;"></div>
<div style="left:565px;top:425px;width:280px;height:1px;background:#969696;"></div>
<div style="left:565px;top:442px;width:280px;height:1px;background:#969696;"></div>
<div style="left:565px;top:459px;width:280px;height:1px;background:#969696;"></div>
<div style="left:565px;top:476px;width:280px;height:1px;background:#969696;"></div>
<div style="left:565px;top:493px;width:280px;height:1px;background:#969696;"></div>
<div style="left:565px;top:510px;width:280px;height:1px;background:#969696;"></div>
<div style="left:565px;top:527px;width:280px;height:1px;background:#969696;"></div>
<div style="left:565px;top:544px;width:280px;height:1px;background:#969696;"></div>
<div style="left:565px;top:561px;width:280px;height:1px;background:#969696;"></div>
<div style="left:565px;top:578px;width:280px;height:1px;background:#969696;"></div>
<div style="left:565px;top:595px;width:280px;height:1px;background:#969696;"></div>
<div style="left:565px;top:612px;width:280px;height:1px;background:#969696;"></div>
<div style="left:565px;top:629px;width:280px;height:1px;background:#969696;"></div>
<div style="left:565px;top:646px;width:280px;height:1px;background:#969696;"></div>
<div style="left:565px;top:664px;width:280px;height:1px;background:#969696;"></div>
<div style="left:565px;top:681px;width:280px;height:1px;background:#969696;"></div>
<div style="left:565px;top:698px;width:280px;height:1px;background:#969696;"></div>
<div style="left:565px;top:715px;width:280px;height:1px;background:#969696;"></div>
<div style="left:565px;top:732px;width:280px;height:1px;background:#969696;"></div>
<div style="left:565px;top:749px;width:280px;height:1px;background:#969696;"></div>
<div style="left:565px;top:766px;width:280px;height:1px;background:#969696;"></div>
<div style="left:565px;top:783px;width:280px;height:1px;background:#969696;"></div>
<div style="left:565px;top:800px;width:280px;height:1px;background:#969696;"></div>
<div style="left:565px;top:817px;width:280px;height:1px;background:#969696;"></div>
<div style="left:565px;top:834px;width:280px;height:1px;background:#969696;"></div>
<div style="left:565px;top:851px;width:280px;height:1px;background:#969696;"></div>
<div style="left:565px;top:868px;width:280px;height:1px;background:#969696;"></div>
<div style="left:565px;top:885px;width:280px;height:1px;background:#969696;"></div>
<div style="left:565px;top:902px;width:280px;height:1px;background:#969696;"></div>
<div style="left:565px;top:919px;width:280px;height:1px;background:#969696;"></div>
<div style="left:565px;top:936px;width:280px;height:1px;background:#969696;"></div>
<div style="left:565px;top:953px;width:280px;height:1px;background:#969696;"></div>
<div style="left:565px;top:970px;width:280px;height:1px;background:#969696;"></div>
<div style="left:565px;top:987px;width:280px;height:1px;background:#969696;"></div>
<span class="t" style="left:751.15px;top:206px;font-size:12px;color:#000;transform:scaleX(0.9312);">-21.470</span>
<span class="t" style="left:751.15px;top:223px;font-size:12px;color:#000;transform:scaleX(0.9312);">-21.480</span>
<span class="t" style="left:751.15px;top:241px;font-size:12px;color:#000;transform:scaleX(0.9312);">-21.490</span>
<span class="t" style="left:751.15px;top:258px;font-size:12px;color:#000;transform:scaleX(0.9312);">-21.500</span>
<span class="t" style="left:751.15px;top:275px;font-size:12px;color:#000;transform:scaleX(0.9312);">-21.510</span>
<span class="t" style="left:751.15px;top:292px;font-size:12px;color:#000;transform:scaleX(0.9312);">-21.520</span>
<span class="t" style="left:751.15px;top:309px;font-size:12px;color:#000;transform:scaleX(0.9312);">-21.530</span>
<span class="t" style="left:751.15px;top:326px;font-size:12px;color:#000;transform:scaleX(0.9312);">-21.540</span>
<span class="t" style="left:751.15px;top:343px;font-size:12px;color:#000;transform:scaleX(0.9312);">-21.550</span>
<span class="t" style="left:751.15px;top:360px;font-size:12px;color:#000;transform:scaleX(0.9312);">-21.560</span>
<span class="t" style="left:751.15px;top:377px;font-size:12px;color:#000;transform:scaleX(0.9312);">-21.570</span>
<span class="t" style="left:751.15px;top:394px;font-size:12px;color:#000;transform:scaleX(0.9312);">-21.580</span>
<span class="t" style="left:751.15px;top:411px;font-size:12px;color:#000;transform:scaleX(0.9312);">-21.590</span>
<span class="t" style="left:751.15px;top:428px;font-size:12px;color:#000;transform:scaleX(0.9312);">-21.600</span>
<span class="t" style="left:751.15px;top:445px;font-size:12px;color:#000;transform:scaleX(0.9312);">-21.610</span>
<span class="t" style="left:751.15px;top:462px;font-size:12px;color:#000;transform:scaleX(0.9312);">-21.620</span>
<span class="t" style="left:751.15px;top:479px;font-size:12px;color:#000;transform:scaleX(0.9312);">-21.630</span>
<span class="t" style="left:751.15px;top:496px;font-size:12px;color:#000;transform:scaleX(0.9312);">-21.640</span>
<span class="t" style="left:751.15px;top:513px;font-size:12px;color:#000;transform:scaleX(0.9312);">-21.650</span>
<span class="t" style="left:751.15px;top:530px;font-size:12px;color:#000;transform:scaleX(0.9312);">-21.660</span>
<span class="t" style="left:751.15px;top:547px;font-size:12px;color:#000;transform:scaleX(0.9312);">-21.670</span>
<span class="t" style="left:751.15px;top:564px;font-size:12px;color:#000;transform:scaleX(0.9312);">-21.680</span>
<span class="t" style="left:751.15px;top:581px;font-size:12px;color:#000;transform:scaleX(0.9312);">-21.690</span>
<span class="t" style="left:751.15px;top:598px;font-size:12px;color:#000;transform:scaleX(0.9312);">-21.700</span>
<span class="t" style="left:751.15px;top:615px;font-size:12px;color:#000;transform:scaleX(0.9312);">-21.710</span>
<span class="t" style="left:751.15px;top:632px;font-size:12px;color:#000;transform:scaleX(0.9312);">-21.720</span>
<span class="t" style="left:751.15px;top:649px;font-size:12px;color:#000;transform:scaleX(0.9312);">-21.730</span>
<span class="t" style="left:751.15px;top:667px;font-size:12px;color:#000;transform:scaleX(0.9312);">-21.740</span>
<span class="t" style="left:751.15px;top:684px;font-size:12px;color:#000;transform:scaleX(0.9312);">-21.750</span>
<span class="t" style="left:751.15px;top:701px;font-size:12px;color:#000;transform:scaleX(0.9312);">-21.760</span>
<span class="t" style="left:751.15px;top:718px;font-size:12px;color:#000;transform:scaleX(0.9312);">-21.770</span>
<span class="t" style="left:751.15px;top:735px;font-size:12px;color:#000;transform:scaleX(0.9312);">-21.780</span>
<span class="t" style="left:751.15px;top:752px;font-size:12px;color:#000;transform:scaleX(0.9312);">-21.790</span>
<span class="t" style="left:751.15px;top:769px;font-size:12px;color:#000;transform:scaleX(0.9312);">-21.800</span>
<span class="t" style="left:751.15px;top:786px;font-size:12px;color:#000;transform:scaleX(0.9312);">-21.810</span>
<span class="t" style="left:751.15px;top:803px;font-size:12px;color:#000;transform:scaleX(0.9312);">-21.820</span>
<span class="t" style="left:751.15px;top:820px;font-size:12px;color:#000;transform:scaleX(0.9312);">-21.830</span>
<span class="t" style="left:751.15px;top:837px;font-size:12px;color:#000;transform:scaleX(0.9312);">-21.840</span>
<span class="t" style="left:751.15px;top:854px;font-size:12px;color:#000;transform:scaleX(0.9312);">-21.850</span>
<span class="t" style="left:751.15px;top:871px;font-size:12px;color:#000;transform:scaleX(0.9312);">-21.860</span>
<span class="t" style="left:751.15px;top:888px;font-size:12px;color:#000;transform:scaleX(0.9312);">-21.870</span>
<span class="t" style="left:751.15px;top:905px;font-size:12px;color:#000;transform:scaleX(0.9312);">-21.880</span>
<span class="t" style="left:751.15px;top:922px;font-size:12px;color:#000;transform:scaleX(0.9312);">-21.890</span>
<span class="t" style="left:751.15px;top:939px;font-size:12px;color:#000;transform:scaleX(0.9312);">-21.900</span>
<span class="t" style="left:751.15px;top:956px;font-size:12px;color:#000;transform:scaleX(0.9312);">-21.910</span>
<span class="t" style="left:751.15px;top:973px;font-size:12px;color:#000;transform:scaleX(0.9312);">-21.920</span>
<div style="left:695px;top:178px;width:1px;height:816px;background:#00a400;"></div>
<div style="left:741px;top:178px;width:1px;height:816px;background:#00a400;"></div>
<div style="left:799px;top:178px;width:1px;height:816px;background:#e00000;"></div>
<div style="left:845px;top:178px;width:1px;height:816px;background:#e00000;"></div>
<div style="left:567px;top:179px;width:33px;height:14.5px;background:#fbfbfb;"></div>
<div style="left:567px;top:193.5px;width:63px;height:14.5px;background:#fbfbfb;"></div>
<span class="t" style="left:571.00px;top:179px;font-size:12px;color:#000;transform:scaleX(0.9590);">Qty:1</span>
<span class="t" style="left:568.00px;top:194px;font-size:12px;color:#000;transform:scaleX(0.8891);">DPL: 0.000P</span>
<div style="left:707.0px;top:181px;width:22px;height:14.5px;background:#e1e1ca;"></div>
<div style="left:812px;top:181px;width:20px;height:14.5px;background:#e1e1ca;"></div>
<span class="t" style="left:708.00px;top:182px;font-size:12px;color:#1fae1f;transform:scaleX(0.9817);">Buy</span>
<span class="t" style="left:812.50px;top:182px;font-size:12px;color:#e00000;transform:scaleX(0.9295);">Sell</span>
<span class="t" style="left:719.00px;top:257px;font-size:12px;color:#dc0020;transform:scaleX(0.8691);">991</span>
<span class="t" style="left:713.40px;top:683px;font-size:12px;color:#dc0020;transform:scaleX(0.9673);">1114</span>
<div style="left:853px;top:125px;width:521px;height:872px;box-shadow:0 4px 14px 0 rgba(0,0,0,0.33);"></div>
<div style="left:853px;top:125px;width:521px;height:872px;background:#fff;outline:1px solid #7c7c7c;outline-offset:-1px;"></div>
<svg style="left:860.9px;top:130.5px" width="18.1" height="18.1" viewBox="-1.284 -1.284 2.567 2.567"><defs><radialGradient id="gb3" cx="0.3" cy="0.3" r="0.75"><stop offset="0" stop-color="#7fe0fa"/><stop offset="0.35" stop-color="#2d9ae6"/><stop offset="0.75" stop-color="#0f55b8"/><stop offset="1" stop-color="#0a3c96"/></radialGradient><radialGradient id="gl3" cx="0.38" cy="0.32" r="0.8"><stop offset="0" stop-color="#dcf870"/><stop offset="0.45" stop-color="#a4d428"/><stop offset="0.85" stop-color="#78aa18"/><stop offset="1" stop-color="#4e8410"/></radialGradient><clipPath id="gc3"><circle cx="0" cy="0" r="1"/></clipPath></defs><ellipse cx="0.05" cy="0.98" rx="0.75" ry="0.16" fill="#503030" opacity="0.22"/><circle cx="0" cy="0" r="1" fill="url(#gb3)"/><g clip-path="url(#gc3)"><path d="M-0.5 -1 L1 -1 L1 -0.25 C0.93 -0.18 0.9 -0.05 0.88 0.1 C0.8 0.3 0.72 0.45 0.55 0.75 C0.45 0.9 0.3 1 0.1 1 C0.05 0.85 0.05 0.7 -0.02 0.58 C-0.1 0.42 -0.3 0.42 -0.48 0.36 C-0.58 0.22 -0.58 0.05 -0.45 -0.1 C-0.38 -0.2 -0.42 -0.3 -0.34 -0.42 C-0.25 -0.55 -0.2 -0.62 -0.12 -0.72 C-0.25 -0.78 -0.4 -0.85 -0.5 -1Z" fill="url(#gl3)"/><path d="M-1 -0.45 C-0.85 -0.6 -0.7 -0.75 -0.55 -0.95 L-0.35 -0.85 C-0.5 -0.7 -0.7 -0.55 -0.85 -0.35Z" fill="#8cc828"/><path d="M-0.25 -0.2 C-0.1 -0.28 0.05 -0.2 0.2 -0.22 C0.22 -0.35 0.3 -0.42 0.4 -0.4 C0.44 -0.25 0.42 -0.1 0.38 0 C0.25 0.02 0.15 0.02 0.05 -0.02 C0 -0.1 -0.15 -0.1 -0.25 -0.2Z" fill="#6cc8c0" opacity="0.85"/><path d="M-0.1 -0.88 C0 -0.95 0.15 -0.95 0.2 -0.86 C0.1 -0.8 0 -0.8 -0.1 -0.88Z" fill="#48a8e8"/></g><circle cx="0" cy="0" r="1" fill="none" stroke="#1a4a9a" stroke-width="0.06" opacity="0.35"/></svg>
<span class="t" style="left:883.00px;top:134px;font-size:12px;color:#a0a0a0;transform:scaleX(0.9419);">SC HOF9-HOG9-NYMEX &nbsp;#3</span>
<svg style="left:1249px;top:130px" width="115" height="20" viewBox="0 0 115 20" shape-rendering="crispEdges"><path d="M5 10.5H15" stroke="#929292" fill="none"/><rect x="50.5" y="5.5" width="9" height="9" stroke="#929292" fill="none"/><path d="M96 5L106 15M106 5L96 15" stroke="#868686" stroke-width="1" fill="none" shape-rendering="auto"/></svg>
<span class="t" style="left:861.00px;top:159px;font-size:12px;color:#747474;transform:scaleX(1.0053);">Chart</span>
<span class="t" style="left:904.20px;top:159px;font-size:12px;color:#747474;transform:scaleX(0.9546);">Trade</span>
<span class="t" style="left:946.80px;top:159px;font-size:12px;color:#747474;transform:scaleX(1.0356);">Window</span>
<div style="left:854px;top:176px;width:519px;height:1px;background:#a0a0a0;"></div>
<div style="left:854px;top:177px;width:517px;height:1px;background:#696969;"></div>
<div style="left:854px;top:176px;width:1px;height:820px;background:#a0a0a0;"></div>
<div style="left:855px;top:177px;width:1px;height:818px;background:#696969;"></div>
<div style="left:856px;top:178px;width:233px;height:816px;background:#f0f0f0;"></div>
<div style="left:1088px;top:178px;width:1px;height:816px;background:#fff;"></div>
<div style="left:1371px;top:177px;width:1px;height:818px;background:#e8e8e8;"></div>
<div style="left:856px;top:994px;width:516px;height:1px;background:#e8e8e8;"></div>
<div style="left:860px;top:180px;width:225px;height:23px;background:#fff;"></div>
<div style="left:860px;top:180px;width:225px;height:1px;background:#a0a0a0;"></div>
<div style="left:860px;top:180px;width:1px;height:23px;background:#a0a0a0;"></div>
<div style="left:861px;top:181px;width:223px;height:1px;background:#696969;"></div>
<div style="left:861px;top:181px;width:1px;height:21px;background:#696969;"></div>
<div style="left:860px;top:202px;width:225px;height:1px;background:#fff;"></div>
<div style="left:1084px;top:180px;width:1px;height:23px;background:#fff;"></div>
<div style="left:861px;top:201px;width:223px;height:1px;background:#e3e3e3;"></div>
<div style="left:1083px;top:181px;width:1px;height:21px;background:#e3e3e3;"></div>
<div style="left:1066px;top:182px;width:17px;height:19px;background:#f0f0f0;"></div>
<div style="left:1066px;top:182px;width:17px;height:1px;background:#fff;"></div>
<div style="left:1066px;top:182px;width:1px;height:19px;background:#fff;"></div>
<div style="left:1067px;top:183px;width:15px;height:1px;background:#ececec;"></div>
<div style="left:1067px;top:183px;width:1px;height:17px;background:#ececec;"></div>
<div style="left:1066px;top:200px;width:17px;height:1px;background:#696969;"></div>
<div style="left:1082px;top:182px;width:1px;height:19px;background:#696969;"></div>
<div style="left:1067px;top:199px;width:15px;height:1px;background:#a0a0a0;"></div>
<div style="left:1081px;top:183px;width:1px;height:17px;background:#a0a0a0;"></div>
<svg style="left:1071px;top:190px" width="7" height="4" viewBox="0 0 7 4" shape-rendering="crispEdges"><rect x="0" y="0" width="7" height="1" fill="#000"/><rect x="1" y="1" width="5" height="1" fill="#000"/><rect x="2" y="2" width="3" height="1" fill="#000"/><rect x="3" y="3" width="1" height="1" fill="#000"/></svg>
<div style="left:860px;top:204px;width:215px;height:19px;background:#f0f0f0;"></div>
<div style="left:860px;top:204px;width:215px;height:1px;background:#a0a0a0;"></div>
<div style="left:860px;top:204px;width:1px;height:19px;background:#a0a0a0;"></div>
<div style="left:860px;top:222px;width:215px;height:1px;background:#fff;"></div>
<div style="left:1074px;top:204px;width:1px;height:19px;background:#fff;"></div>
<div style="left:861px;top:249px;width:224px;height:437px;background:#f0f0f0;"></div>
<div style="left:861px;top:249px;width:224px;height:1px;background:#fff;"></div>
<div style="left:861px;top:249px;width:1px;height:437px;background:#fff;"></div>
<div style="left:1084px;top:249px;width:1px;height:437px;background:#696969;"></div>
<div style="left:861px;top:685px;width:224px;height:1px;background:#696969;"></div>
<div style="left:1083px;top:250px;width:1px;height:435px;background:#a0a0a0;"></div>
<div style="left:862px;top:684px;width:222px;height:1px;background:#a0a0a0;"></div>
<div style="left:904px;top:230px;width:51px;height:19px;background:#f0f0f0;"></div>
<div style="left:904px;top:231px;width:1px;height:18px;background:#fff;"></div>
<div style="left:905px;top:229px;width:48px;height:1px;background:#fff;"></div>
<div style="left:905px;top:230px;width:1px;height:1px;background:#fff;"></div>
<div style="left:954px;top:231px;width:1px;height:18px;background:#696969;"></div>
<div style="left:953px;top:230px;width:1px;height:19px;background:#a0a0a0;"></div>
<span class="t" style="left:907.70px;top:233px;font-size:13px;color:#000;transform:scaleX(0.9664);">Targets</span>
<div style="left:955px;top:230px;width:30px;height:19px;background:#f0f0f0;"></div>
<div style="left:955px;top:231px;width:1px;height:18px;background:#fff;"></div>
<div style="left:956px;top:229px;width:27px;height:1px;background:#fff;"></div>
<div style="left:956px;top:230px;width:1px;height:1px;background:#fff;"></div>
<div style="left:984px;top:231px;width:1px;height:18px;background:#696969;"></div>
<div style="left:983px;top:230px;width:1px;height:19px;background:#a0a0a0;"></div>
<span class="t" style="left:961.00px;top:233px;font-size:13px;color:#000;transform:scaleX(0.9430);">Set</span>
<div style="left:985px;top:230px;width:20px;height:19px;background:#f0f0f0;"></div>
<div style="left:985px;top:231px;width:1px;height:18px;background:#fff;"></div>
<div style="left:986px;top:229px;width:17px;height:1px;background:#fff;"></div>
<div style="left:986px;top:230px;width:1px;height:1px;background:#fff;"></div>
<div style="left:1004px;top:231px;width:1px;height:18px;background:#696969;"></div>
<div style="left:1003px;top:230px;width:1px;height:19px;background:#a0a0a0;"></div>
<span class="t" style="left:990.80px;top:233px;font-size:13px;color:#000;transform:scaleX(0.9054);">C</span>
<div style="left:1005px;top:230px;width:19px;height:19px;background:#f0f0f0;"></div>
<div style="left:1005px;top:231px;width:1px;height:18px;background:#fff;"></div>
<div style="left:1006px;top:229px;width:16px;height:1px;background:#fff;"></div>
<div style="left:1006px;top:230px;width:1px;height:1px;background:#fff;"></div>
<div style="left:1023px;top:231px;width:1px;height:18px;background:#696969;"></div>
<div style="left:1022px;top:230px;width:1px;height:19px;background:#a0a0a0;"></div>
<span class="t" style="left:1010.60px;top:233px;font-size:13px;color:#000;transform:scaleX(0.9226);">A</span>
<div style="left:861px;top:228px;width:43px;height:22px;background:#f0f0f0;"></div>
<div style="left:861px;top:229px;width:1px;height:21px;background:#fff;"></div>
<div style="left:862px;top:227px;width:40px;height:1px;background:#fff;"></div>
<div style="left:862px;top:228px;width:1px;height:1px;background:#fff;"></div>
<div style="left:903px;top:229px;width:1px;height:20px;background:#696969;"></div>
<div style="left:902px;top:228px;width:1px;height:21px;background:#a0a0a0;"></div>
<span class="t" style="left:867.80px;top:231px;font-size:13px;color:#000;transform:scaleX(0.9760);">Main</span>
<span class="t" style="left:873.50px;top:261px;font-size:13px;color:#000;transform:scaleX(0.8957);">Pos Qty@Price:</span>
<div style="left:873px;top:277px;width:117px;height:19px;background:#fff;"></div>
<div style="left:873px;top:277px;width:117px;height:1px;background:#a0a0a0;"></div>
<div style="left:873px;top:277px;width:1px;height:19px;background:#a0a0a0;"></div>
<div style="left:874px;top:278px;width:115px;height:1px;background:#696969;"></div>
<div style="left:874px;top:278px;width:1px;height:17px;background:#696969;"></div>
<div style="left:873px;top:295px;width:117px;height:1px;background:#fff;"></div>
<div style="left:989px;top:277px;width:1px;height:19px;background:#fff;"></div>
<div style="left:874px;top:294px;width:115px;height:1px;background:#e3e3e3;"></div>
<div style="left:988px;top:278px;width:1px;height:17px;background:#e3e3e3;"></div>
<span class="t" style="left:875.50px;top:280px;font-size:13px;color:#000;transform:scaleX(0.8998);">Flat</span>
<div style="left:873px;top:302px;width:117px;height:19px;background:#fff;"></div>
<div style="left:873px;top:302px;width:117px;height:1px;background:#a0a0a0;"></div>
<div style="left:873px;top:302px;width:1px;height:19px;background:#a0a0a0;"></div>
<div style="left:874px;top:303px;width:115px;height:1px;background:#696969;"></div>
<div style="left:874px;top:303px;width:1px;height:17px;background:#696969;"></div>
<div style="left:873px;top:320px;width:117px;height:1px;background:#fff;"></div>
<div style="left:989px;top:302px;width:1px;height:19px;background:#fff;"></div>
<div style="left:874px;top:319px;width:115px;height:1px;background:#e3e3e3;"></div>
<div style="left:988px;top:303px;width:1px;height:17px;background:#e3e3e3;"></div>
<span class="t" style="left:875.50px;top:305px;font-size:13px;color:#000;transform:scaleX(0.9126);">P/L: 0.000P</span>
<div style="left:873px;top:326px;width:117px;height:19px;background:#fff;"></div>
<div style="left:873px;top:326px;width:117px;height:1px;background:#a0a0a0;"></div>
<div style="left:873px;top:326px;width:1px;height:19px;background:#a0a0a0;"></div>
<div style="left:874px;top:327px;width:115px;height:1px;background:#696969;"></div>
<div style="left:874px;top:327px;width:1px;height:17px;background:#696969;"></div>
<div style="left:873px;top:344px;width:117px;height:1px;background:#fff;"></div>
<div style="left:989px;top:326px;width:1px;height:19px;background:#fff;"></div>
<div style="left:874px;top:343px;width:115px;height:1px;background:#e3e3e3;"></div>
<div style="left:988px;top:327px;width:1px;height:17px;background:#e3e3e3;"></div>
<span class="t" style="left:875.50px;top:329px;font-size:13px;color:#000;transform:scaleX(0.9145);">DlyPL: 0.000P</span>
<div style="left:873px;top:350px;width:117px;height:23px;background:#fff;"></div>
<div style="left:873px;top:350px;width:117px;height:1px;background:#a0a0a0;"></div>
<div style="left:873px;top:350px;width:1px;height:23px;background:#a0a0a0;"></div>
<div style="left:874px;top:351px;width:115px;height:1px;background:#696969;"></div>
<div style="left:874px;top:351px;width:1px;height:21px;background:#696969;"></div>
<div style="left:873px;top:372px;width:117px;height:1px;background:#fff;"></div>
<div style="left:989px;top:350px;width:1px;height:23px;background:#fff;"></div>
<div style="left:874px;top:371px;width:115px;height:1px;background:#e3e3e3;"></div>
<div style="left:988px;top:351px;width:1px;height:21px;background:#e3e3e3;"></div>
<div style="left:971px;top:352px;width:17px;height:19px;background:#f0f0f0;"></div>
<div style="left:971px;top:352px;width:17px;height:1px;background:#fff;"></div>
<div style="left:971px;top:352px;width:1px;height:19px;background:#fff;"></div>
<div style="left:972px;top:353px;width:15px;height:1px;background:#ececec;"></div>
<div style="left:972px;top:353px;width:1px;height:17px;background:#ececec;"></div>
<div style="left:971px;top:370px;width:17px;height:1px;background:#696969;"></div>
<div style="left:987px;top:352px;width:1px;height:19px;background:#696969;"></div>
<div style="left:972px;top:369px;width:15px;height:1px;background:#a0a0a0;"></div>
<div style="left:986px;top:353px;width:1px;height:17px;background:#a0a0a0;"></div>
<svg style="left:976px;top:360px" width="7" height="4" viewBox="0 0 7 4" shape-rendering="crispEdges"><rect x="0" y="0" width="7" height="1" fill="#000"/><rect x="1" y="1" width="5" height="1" fill="#000"/><rect x="2" y="2" width="3" height="1" fill="#000"/><rect x="3" y="3" width="1" height="1" fill="#000"/></svg>
<span class="t" style="left:877.00px;top:354px;font-size:13px;color:#000;transform:scaleX(0.9700);">jsmedbergsim2</span>
<div style="left:992px;top:259px;width:39px;height:38px;background:#80ff80;"></div>
<div style="left:992px;top:259px;width:39px;height:1px;background:#fff;"></div>
<div style="left:992px;top:259px;width:1px;height:38px;background:#fff;"></div>
<div style="left:993px;top:260px;width:37px;height:1px;background:#ececec;"></div>
<div style="left:993px;top:260px;width:1px;height:36px;background:#ececec;"></div>
<div style="left:992px;top:296px;width:39px;height:1px;background:#696969;"></div>
<div style="left:1030px;top:259px;width:1px;height:38px;background:#696969;"></div>
<div style="left:993px;top:295px;width:37px;height:1px;background:#a0a0a0;"></div>
<div style="left:1029px;top:260px;width:1px;height:36px;background:#a0a0a0;"></div>
<span class="t" style="left:1000.60px;top:265px;font-size:11px;color:#000;font-weight:bold;transform:scaleX(0.9387);">BUY</span>
<span class="t" style="left:999.45px;top:279px;font-size:11px;color:#000;font-weight:bold;transform:scaleX(1.0115);">MKT</span>
<div style="left:1037px;top:259px;width:39px;height:38px;background:#ff8080;"></div>
<div style="left:1037px;top:259px;width:39px;height:1px;background:#fff;"></div>
<div style="left:1037px;top:259px;width:1px;height:38px;background:#fff;"></div>
<div style="left:1038px;top:260px;width:37px;height:1px;background:#ececec;"></div>
<div style="left:1038px;top:260px;width:1px;height:36px;background:#ececec;"></div>
<div style="left:1037px;top:296px;width:39px;height:1px;background:#696969;"></div>
<div style="left:1075px;top:259px;width:1px;height:38px;background:#696969;"></div>
<div style="left:1038px;top:295px;width:37px;height:1px;background:#a0a0a0;"></div>
<div style="left:1074px;top:260px;width:1px;height:36px;background:#a0a0a0;"></div>
<span class="t" style="left:1043.10px;top:265px;font-size:11px;color:#000;font-weight:bold;transform:scaleX(0.9533);">SELL</span>
<span class="t" style="left:1044.45px;top:279px;font-size:11px;color:#000;font-weight:bold;transform:scaleX(1.0115);">MKT</span>
<div style="left:992px;top:298px;width:39px;height:38px;background:#80ff80;"></div>
<div style="left:992px;top:298px;width:39px;height:1px;background:#fff;"></div>
<div style="left:992px;top:298px;width:1px;height:38px;background:#fff;"></div>
<div style="left:993px;top:299px;width:37px;height:1px;background:#ececec;"></div>
<div style="left:993px;top:299px;width:1px;height:36px;background:#ececec;"></div>
<div style="left:992px;top:335px;width:39px;height:1px;background:#696969;"></div>
<div style="left:1030px;top:298px;width:1px;height:38px;background:#696969;"></div>
<div style="left:993px;top:334px;width:37px;height:1px;background:#a0a0a0;"></div>
<div style="left:1029px;top:299px;width:1px;height:36px;background:#a0a0a0;"></div>
<span class="t" style="left:1000.60px;top:304px;font-size:11px;color:#000;font-weight:bold;transform:scaleX(0.9387);">BUY</span>
<span class="t" style="left:999.95px;top:318px;font-size:11px;color:#000;font-weight:bold;transform:scaleX(0.9946);">ASK</span>
<div style="left:1037px;top:298px;width:39px;height:38px;background:#ff8080;"></div>
<div style="left:1037px;top:298px;width:39px;height:1px;background:#fff;"></div>
<div style="left:1037px;top:298px;width:1px;height:38px;background:#fff;"></div>
<div style="left:1038px;top:299px;width:37px;height:1px;background:#ececec;"></div>
<div style="left:1038px;top:299px;width:1px;height:36px;background:#ececec;"></div>
<div style="left:1037px;top:335px;width:39px;height:1px;background:#696969;"></div>
<div style="left:1075px;top:298px;width:1px;height:38px;background:#696969;"></div>
<div style="left:1038px;top:334px;width:37px;height:1px;background:#a0a0a0;"></div>
<div style="left:1074px;top:299px;width:1px;height:36px;background:#a0a0a0;"></div>
<span class="t" style="left:1043.10px;top:304px;font-size:11px;color:#000;font-weight:bold;transform:scaleX(0.9533);">SELL</span>
<span class="t" style="left:1044.95px;top:318px;font-size:11px;color:#000;font-weight:bold;transform:scaleX(0.9946);">ASK</span>
<div style="left:992px;top:337px;width:39px;height:38px;background:#80ff80;"></div>
<div style="left:992px;top:337px;width:39px;height:1px;background:#fff;"></div>
<div style="left:992px;top:337px;width:1px;height:38px;background:#fff;"></div>
<div style="left:993px;top:338px;width:37px;height:1px;background:#ececec;"></div>
<div style="left:993px;top:338px;width:1px;height:36px;background:#ececec;"></div>
<div style="left:992px;top:374px;width:39px;height:1px;background:#696969;"></div>
<div style="left:1030px;top:337px;width:1px;height:38px;background:#696969;"></div>
<div style="left:993px;top:373px;width:37px;height:1px;background:#a0a0a0;"></div>
<div style="left:1029px;top:338px;width:1px;height:36px;background:#a0a0a0;"></div>
<span class="t" style="left:1000.60px;top:343px;font-size:11px;color:#000;font-weight:bold;transform:scaleX(0.9387);">BUY</span>
<span class="t" style="left:1001.60px;top:357px;font-size:11px;color:#000;font-weight:bold;transform:scaleX(1.0452);">BID</span>
<div style="left:1037px;top:337px;width:39px;height:38px;background:#ff8080;"></div>
<div style="left:1037px;top:337px;width:39px;height:1px;background:#fff;"></div>
<div style="left:1037px;top:337px;width:1px;height:38px;background:#fff;"></div>
<div style="left:1038px;top:338px;width:37px;height:1px;background:#ececec;"></div>
<div style="left:1038px;top:338px;width:1px;height:36px;background:#ececec;"></div>
<div style="left:1037px;top:374px;width:39px;height:1px;background:#696969;"></div>
<div style="left:1075px;top:337px;width:1px;height:38px;background:#696969;"></div>
<div style="left:1038px;top:373px;width:37px;height:1px;background:#a0a0a0;"></div>
<div style="left:1074px;top:338px;width:1px;height:36px;background:#a0a0a0;"></div>
<span class="t" style="left:1043.10px;top:343px;font-size:11px;color:#000;font-weight:bold;transform:scaleX(0.9533);">SELL</span>
<span class="t" style="left:1046.60px;top:357px;font-size:11px;color:#000;font-weight:bold;transform:scaleX(1.0452);">BID</span>
<div style="left:866px;top:380px;width:65px;height:30px;background:#ff8040;"></div>
<div style="left:866px;top:380px;width:65px;height:1px;background:#fff;"></div>
<div style="left:866px;top:380px;width:1px;height:30px;background:#fff;"></div>
<div style="left:867px;top:381px;width:63px;height:1px;background:#ececec;"></div>
<div style="left:867px;top:381px;width:1px;height:28px;background:#ececec;"></div>
<div style="left:866px;top:409px;width:65px;height:1px;background:#696969;"></div>
<div style="left:930px;top:380px;width:1px;height:30px;background:#696969;"></div>
<div style="left:867px;top:408px;width:63px;height:1px;background:#a0a0a0;"></div>
<div style="left:929px;top:381px;width:1px;height:28px;background:#a0a0a0;"></div>
<div style="left:931px;top:380px;width:68px;height:30px;background:#ff8040;"></div>
<div style="left:931px;top:380px;width:68px;height:1px;background:#fff;"></div>
<div style="left:931px;top:380px;width:1px;height:30px;background:#fff;"></div>
<div style="left:932px;top:381px;width:66px;height:1px;background:#ececec;"></div>
<div style="left:932px;top:381px;width:1px;height:28px;background:#ececec;"></div>
<div style="left:931px;top:409px;width:68px;height:1px;background:#696969;"></div>
<div style="left:998px;top:380px;width:1px;height:30px;background:#696969;"></div>
<div style="left:932px;top:408px;width:66px;height:1px;background:#a0a0a0;"></div>
<div style="left:997px;top:381px;width:1px;height:28px;background:#a0a0a0;"></div>
<div style="left:1001px;top:380px;width:58px;height:30px;background:#989898;"></div>
<div style="left:1001px;top:380px;width:58px;height:1px;background:#fff;"></div>
<div style="left:1001px;top:380px;width:1px;height:30px;background:#fff;"></div>
<div style="left:1002px;top:381px;width:56px;height:1px;background:#ececec;"></div>
<div style="left:1002px;top:381px;width:1px;height:28px;background:#ececec;"></div>
<div style="left:1001px;top:409px;width:58px;height:1px;background:#696969;"></div>
<div style="left:1058px;top:380px;width:1px;height:30px;background:#696969;"></div>
<div style="left:1002px;top:408px;width:56px;height:1px;background:#a0a0a0;"></div>
<div style="left:1057px;top:381px;width:1px;height:28px;background:#a0a0a0;"></div>
<div style="left:1003px;top:388px;width:53px;height:14px;background:#ff8040;"></div>
<div style="left:1060px;top:380px;width:19px;height:30px;background:#f0f0f0;"></div>
<div style="left:1060px;top:380px;width:19px;height:1px;background:#fff;"></div>
<div style="left:1060px;top:380px;width:1px;height:30px;background:#fff;"></div>
<div style="left:1061px;top:381px;width:17px;height:1px;background:#ececec;"></div>
<div style="left:1061px;top:381px;width:1px;height:28px;background:#ececec;"></div>
<div style="left:1060px;top:409px;width:19px;height:1px;background:#696969;"></div>
<div style="left:1078px;top:380px;width:1px;height:30px;background:#696969;"></div>
<div style="left:1061px;top:408px;width:17px;height:1px;background:#a0a0a0;"></div>
<div style="left:1077px;top:381px;width:1px;height:28px;background:#a0a0a0;"></div>
<span class="t" style="left:879.70px;top:389px;font-size:11px;color:#000;font-weight:bold;letter-spacing:0.292px;">Flatten</span>
<div style="left:880px;top:400px;width:6px;height:1px;background:#000;"></div>
<span class="t" style="left:941.70px;top:389px;font-size:11px;color:#000;font-weight:bold;letter-spacing:0.541px;">Reverse</span>
<div style="left:942px;top:400px;width:7px;height:1px;background:#000;"></div>
<span class="t" style="left:1003.70px;top:389px;font-size:11px;color:#000;font-weight:bold;letter-spacing:0.219px;">CancelAll</span>
<div style="left:1041px;top:400px;width:7.5px;height:1px;background:#000;"></div>
<span class="t" style="left:1064.00px;top:389px;font-size:11px;color:#000;font-weight:bold;transform:scaleX(1.1132);">M</span>
<div style="left:868px;top:418px;width:35px;height:26px;background:#f3f3f3;"></div>
<div style="left:868px;top:418px;width:35px;height:1px;background:#696969;"></div>
<div style="left:868px;top:418px;width:1px;height:26px;background:#696969;"></div>
<div style="left:869px;top:419px;width:33px;height:1px;background:#a0a0a0;"></div>
<div style="left:869px;top:419px;width:1px;height:24px;background:#a0a0a0;"></div>
<div style="left:868px;top:443px;width:35px;height:1px;background:#fff;"></div>
<div style="left:902px;top:418px;width:1px;height:26px;background:#fff;"></div>
<span class="t" style="left:881.88px;top:424px;font-size:13px;color:#000;">1</span>
<div style="left:903px;top:418px;width:35px;height:26px;background:#f0f0f0;"></div>
<div style="left:903px;top:418px;width:35px;height:1px;background:#fff;"></div>
<div style="left:903px;top:418px;width:1px;height:26px;background:#fff;"></div>
<div style="left:904px;top:419px;width:33px;height:1px;background:#ececec;"></div>
<div style="left:904px;top:419px;width:1px;height:24px;background:#ececec;"></div>
<div style="left:903px;top:443px;width:35px;height:1px;background:#696969;"></div>
<div style="left:937px;top:418px;width:1px;height:26px;background:#696969;"></div>
<div style="left:904px;top:442px;width:33px;height:1px;background:#a0a0a0;"></div>
<div style="left:936px;top:419px;width:1px;height:24px;background:#a0a0a0;"></div>
<span class="t" style="left:916.88px;top:424px;font-size:13px;color:#000;">2</span>
<div style="left:938px;top:418px;width:35px;height:26px;background:#f0f0f0;"></div>
<div style="left:938px;top:418px;width:35px;height:1px;background:#fff;"></div>
<div style="left:938px;top:418px;width:1px;height:26px;background:#fff;"></div>
<div style="left:939px;top:419px;width:33px;height:1px;background:#ececec;"></div>
<div style="left:939px;top:419px;width:1px;height:24px;background:#ececec;"></div>
<div style="left:938px;top:443px;width:35px;height:1px;background:#696969;"></div>
<div style="left:972px;top:418px;width:1px;height:26px;background:#696969;"></div>
<div style="left:939px;top:442px;width:33px;height:1px;background:#a0a0a0;"></div>
<div style="left:971px;top:419px;width:1px;height:24px;background:#a0a0a0;"></div>
<span class="t" style="left:951.88px;top:424px;font-size:13px;color:#000;">4</span>
<div style="left:973px;top:418px;width:35px;height:26px;background:#f0f0f0;"></div>
<div style="left:973px;top:418px;width:35px;height:1px;background:#fff;"></div>
<div style="left:973px;top:418px;width:1px;height:26px;background:#fff;"></div>
<div style="left:974px;top:419px;width:33px;height:1px;background:#ececec;"></div>
<div style="left:974px;top:419px;width:1px;height:24px;background:#ececec;"></div>
<div style="left:973px;top:443px;width:35px;height:1px;background:#696969;"></div>
<div style="left:1007px;top:418px;width:1px;height:26px;background:#696969;"></div>
<div style="left:974px;top:442px;width:33px;height:1px;background:#a0a0a0;"></div>
<div style="left:1006px;top:419px;width:1px;height:24px;background:#a0a0a0;"></div>
<span class="t" style="left:986.88px;top:424px;font-size:13px;color:#000;">5</span>
<div style="left:1008px;top:418px;width:35px;height:26px;background:#f0f0f0;"></div>
<div style="left:1008px;top:418px;width:35px;height:1px;background:#fff;"></div>
<div style="left:1008px;top:418px;width:1px;height:26px;background:#fff;"></div>
<div style="left:1009px;top:419px;width:33px;height:1px;background:#ececec;"></div>
<div style="left:1009px;top:419px;width:1px;height:24px;background:#ececec;"></div>
<div style="left:1008px;top:443px;width:35px;height:1px;background:#696969;"></div>
<div style="left:1042px;top:418px;width:1px;height:26px;background:#696969;"></div>
<div style="left:1009px;top:442px;width:33px;height:1px;background:#a0a0a0;"></div>
<div style="left:1041px;top:419px;width:1px;height:24px;background:#a0a0a0;"></div>
<span class="t" style="left:1021.88px;top:424px;font-size:13px;color:#000;">8</span>
<div style="left:1043px;top:418px;width:35px;height:26px;background:#f0f0f0;"></div>
<div style="left:1043px;top:418px;width:35px;height:1px;background:#fff;"></div>
<div style="left:1043px;top:418px;width:1px;height:26px;background:#fff;"></div>
<div style="left:1044px;top:419px;width:33px;height:1px;background:#ececec;"></div>
<div style="left:1044px;top:419px;width:1px;height:24px;background:#ececec;"></div>
<div style="left:1043px;top:443px;width:35px;height:1px;background:#696969;"></div>
<div style="left:1077px;top:418px;width:1px;height:26px;background:#696969;"></div>
<div style="left:1044px;top:442px;width:33px;height:1px;background:#a0a0a0;"></div>
<div style="left:1076px;top:419px;width:1px;height:24px;background:#a0a0a0;"></div>
<span class="t" style="left:1053.27px;top:424px;font-size:13px;color:#000;">10</span>
<div style="left:875px;top:458px;width:13px;height:13px;background:#fff;"></div>
<div style="left:875px;top:458px;width:13px;height:1px;background:#a0a0a0;"></div>
<div style="left:875px;top:458px;width:1px;height:13px;background:#a0a0a0;"></div>
<div style="left:876px;top:459px;width:11px;height:1px;background:#696969;"></div>
<div style="left:876px;top:459px;width:1px;height:11px;background:#696969;"></div>
<div style="left:875px;top:470px;width:13px;height:1px;background:#fff;"></div>
<div style="left:887px;top:458px;width:1px;height:13px;background:#fff;"></div>
<div style="left:876px;top:469px;width:11px;height:1px;background:#e3e3e3;"></div>
<div style="left:886px;top:459px;width:1px;height:11px;background:#e3e3e3;"></div>
<span class="t" style="left:893.50px;top:457px;font-size:13px;color:#000;transform:scaleX(0.9199);">Use Attached Orders</span>
<div style="left:1039px;top:448px;width:40px;height:26px;background:#f0f0f0;"></div>
<div style="left:1039px;top:448px;width:40px;height:1px;background:#fff;"></div>
<div style="left:1039px;top:448px;width:1px;height:26px;background:#fff;"></div>
<div style="left:1040px;top:449px;width:38px;height:1px;background:#ececec;"></div>
<div style="left:1040px;top:449px;width:1px;height:24px;background:#ececec;"></div>
<div style="left:1039px;top:473px;width:40px;height:1px;background:#696969;"></div>
<div style="left:1078px;top:448px;width:1px;height:26px;background:#696969;"></div>
<div style="left:1040px;top:472px;width:38px;height:1px;background:#a0a0a0;"></div>
<div style="left:1077px;top:449px;width:1px;height:24px;background:#a0a0a0;"></div>
<span class="t" style="left:1050.50px;top:454px;font-size:13px;color:#000;transform:scaleX(0.9226);">BE</span>
<div style="left:868px;top:477px;width:210px;height:1px;background:#a0a0a0;"></div>
<div style="left:868px;top:477px;width:1px;height:201px;background:#a0a0a0;"></div>
<div style="left:1077px;top:477px;width:1px;height:201px;background:#fff;"></div>
<div style="left:868px;top:677px;width:210px;height:1px;background:#fff;"></div>
<div style="left:869px;top:478px;width:208px;height:1px;background:#fff;"></div>
<div style="left:869px;top:478px;width:1px;height:199px;background:#fff;"></div>
<div style="left:1076px;top:478px;width:1px;height:199px;background:#a0a0a0;"></div>
<div style="left:869px;top:676px;width:208px;height:1px;background:#a0a0a0;"></div>
<div style="left:871px;top:484px;width:203px;height:23px;background:#fff;"></div>
<div style="left:871px;top:484px;width:203px;height:1px;background:#a0a0a0;"></div>
<div style="left:871px;top:484px;width:1px;height:23px;background:#a0a0a0;"></div>
<div style="left:872px;top:485px;width:201px;height:1px;background:#696969;"></div>
<div style="left:872px;top:485px;width:1px;height:21px;background:#696969;"></div>
<div style="left:871px;top:506px;width:203px;height:1px;background:#fff;"></div>
<div style="left:1073px;top:484px;width:1px;height:23px;background:#fff;"></div>
<div style="left:872px;top:505px;width:201px;height:1px;background:#e3e3e3;"></div>
<div style="left:1072px;top:485px;width:1px;height:21px;background:#e3e3e3;"></div>
<div style="left:1055px;top:486px;width:17px;height:19px;background:#f0f0f0;"></div>
<div style="left:1055px;top:486px;width:17px;height:1px;background:#fff;"></div>
<div style="left:1055px;top:486px;width:1px;height:19px;background:#fff;"></div>
<div style="left:1056px;top:487px;width:15px;height:1px;background:#ececec;"></div>
<div style="left:1056px;top:487px;width:1px;height:17px;background:#ececec;"></div>
<div style="left:1055px;top:504px;width:17px;height:1px;background:#696969;"></div>
<div style="left:1071px;top:486px;width:1px;height:19px;background:#696969;"></div>
<div style="left:1056px;top:503px;width:15px;height:1px;background:#a0a0a0;"></div>
<div style="left:1070px;top:487px;width:1px;height:17px;background:#a0a0a0;"></div>
<svg style="left:1060px;top:494px" width="7" height="4" viewBox="0 0 7 4" shape-rendering="crispEdges"><rect x="0" y="0" width="7" height="1" fill="#000"/><rect x="1" y="1" width="5" height="1" fill="#000"/><rect x="2" y="2" width="3" height="1" fill="#000"/><rect x="3" y="3" width="1" height="1" fill="#000"/></svg>
<span class="t" style="left:875.00px;top:489px;font-size:13px;color:#000;transform:scaleX(0.9565);">Market</span>
<div style="left:950px;top:510px;width:124px;height:23px;background:#f0f0f0;"></div>
<div style="left:950px;top:510px;width:124px;height:1px;background:#a0a0a0;"></div>
<div style="left:950px;top:510px;width:1px;height:23px;background:#a0a0a0;"></div>
<div style="left:951px;top:511px;width:122px;height:1px;background:#696969;"></div>
<div style="left:951px;top:511px;width:1px;height:21px;background:#696969;"></div>
<div style="left:950px;top:532px;width:124px;height:1px;background:#fff;"></div>
<div style="left:1073px;top:510px;width:1px;height:23px;background:#fff;"></div>
<div style="left:951px;top:531px;width:122px;height:1px;background:#e3e3e3;"></div>
<div style="left:1072px;top:511px;width:1px;height:21px;background:#e3e3e3;"></div>
<div style="left:1055px;top:512px;width:17px;height:19px;background:#f0f0f0;"></div>
<div style="left:1055px;top:512px;width:17px;height:1px;background:#fff;"></div>
<div style="left:1055px;top:512px;width:1px;height:19px;background:#fff;"></div>
<div style="left:1056px;top:513px;width:15px;height:1px;background:#ececec;"></div>
<div style="left:1056px;top:513px;width:1px;height:17px;background:#ececec;"></div>
<div style="left:1055px;top:530px;width:17px;height:1px;background:#696969;"></div>
<div style="left:1071px;top:512px;width:1px;height:19px;background:#696969;"></div>
<div style="left:1056px;top:529px;width:15px;height:1px;background:#a0a0a0;"></div>
<div style="left:1070px;top:513px;width:1px;height:17px;background:#a0a0a0;"></div>
<svg style="left:1060px;top:520px" width="7" height="4" viewBox="0 0 7 4" shape-rendering="crispEdges"><rect x="0" y="0" width="7" height="1" fill="#a0a0a0"/><rect x="1" y="1" width="5" height="1" fill="#a0a0a0"/><rect x="2" y="2" width="3" height="1" fill="#a0a0a0"/><rect x="3" y="3" width="1" height="1" fill="#a0a0a0"/></svg>
<div style="left:950px;top:536px;width:124px;height:23px;background:#f0f0f0;"></div>
<div style="left:950px;top:536px;width:124px;height:1px;background:#a0a0a0;"></div>
<div style="left:950px;top:536px;width:1px;height:23px;background:#a0a0a0;"></div>
<div style="left:951px;top:537px;width:122px;height:1px;background:#696969;"></div>
<div style="left:951px;top:537px;width:1px;height:21px;background:#696969;"></div>
<div style="left:950px;top:558px;width:124px;height:1px;background:#fff;"></div>
<div style="left:1073px;top:536px;width:1px;height:23px;background:#fff;"></div>
<div style="left:951px;top:557px;width:122px;height:1px;background:#e3e3e3;"></div>
<div style="left:1072px;top:537px;width:1px;height:21px;background:#e3e3e3;"></div>
<div style="left:1055px;top:538px;width:17px;height:19px;background:#f0f0f0;"></div>
<div style="left:1055px;top:538px;width:17px;height:1px;background:#fff;"></div>
<div style="left:1055px;top:538px;width:1px;height:19px;background:#fff;"></div>
<div style="left:1056px;top:539px;width:15px;height:1px;background:#ececec;"></div>
<div style="left:1056px;top:539px;width:1px;height:17px;background:#ececec;"></div>
<div style="left:1055px;top:556px;width:17px;height:1px;background:#696969;"></div>
<div style="left:1071px;top:538px;width:1px;height:19px;background:#696969;"></div>
<div style="left:1056px;top:555px;width:15px;height:1px;background:#a0a0a0;"></div>
<div style="left:1070px;top:539px;width:1px;height:17px;background:#a0a0a0;"></div>
<svg style="left:1060px;top:546px" width="7" height="4" viewBox="0 0 7 4" shape-rendering="crispEdges"><rect x="0" y="0" width="7" height="1" fill="#a0a0a0"/><rect x="1" y="1" width="5" height="1" fill="#a0a0a0"/><rect x="2" y="2" width="3" height="1" fill="#a0a0a0"/><rect x="3" y="3" width="1" height="1" fill="#a0a0a0"/></svg>
<div style="left:950px;top:559px;width:124px;height:23px;background:#fff;"></div>
<div style="left:950px;top:559px;width:124px;height:1px;background:#a0a0a0;"></div>
<div style="left:950px;top:559px;width:1px;height:23px;background:#a0a0a0;"></div>
<div style="left:951px;top:560px;width:122px;height:1px;background:#696969;"></div>
<div style="left:951px;top:560px;width:1px;height:21px;background:#696969;"></div>
<div style="left:950px;top:581px;width:124px;height:1px;background:#fff;"></div>
<div style="left:1073px;top:559px;width:1px;height:23px;background:#fff;"></div>
<div style="left:951px;top:580px;width:122px;height:1px;background:#e3e3e3;"></div>
<div style="left:1072px;top:560px;width:1px;height:21px;background:#e3e3e3;"></div>
<div style="left:1055px;top:561px;width:17px;height:19px;background:#f0f0f0;"></div>
<div style="left:1055px;top:561px;width:17px;height:1px;background:#fff;"></div>
<div style="left:1055px;top:561px;width:1px;height:19px;background:#fff;"></div>
<div style="left:1056px;top:562px;width:15px;height:1px;background:#ececec;"></div>
<div style="left:1056px;top:562px;width:1px;height:17px;background:#ececec;"></div>
<div style="left:1055px;top:579px;width:17px;height:1px;background:#696969;"></div>
<div style="left:1071px;top:561px;width:1px;height:19px;background:#696969;"></div>
<div style="left:1056px;top:578px;width:15px;height:1px;background:#a0a0a0;"></div>
<div style="left:1070px;top:562px;width:1px;height:17px;background:#a0a0a0;"></div>
<svg style="left:1060px;top:569px" width="7" height="4" viewBox="0 0 7 4" shape-rendering="crispEdges"><rect x="0" y="0" width="7" height="1" fill="#000"/><rect x="1" y="1" width="5" height="1" fill="#000"/><rect x="2" y="2" width="3" height="1" fill="#000"/><rect x="3" y="3" width="1" height="1" fill="#000"/></svg>
<span class="t" style="left:954.00px;top:563px;font-size:13px;color:#000;">1</span>
<div style="left:950px;top:585px;width:124px;height:23px;background:#fff;"></div>
<div style="left:950px;top:585px;width:124px;height:1px;background:#a0a0a0;"></div>
<div style="left:950px;top:585px;width:1px;height:23px;background:#a0a0a0;"></div>
<div style="left:951px;top:586px;width:122px;height:1px;background:#696969;"></div>
<div style="left:951px;top:586px;width:1px;height:21px;background:#696969;"></div>
<div style="left:950px;top:607px;width:124px;height:1px;background:#fff;"></div>
<div style="left:1073px;top:585px;width:1px;height:23px;background:#fff;"></div>
<div style="left:951px;top:606px;width:122px;height:1px;background:#e3e3e3;"></div>
<div style="left:1072px;top:586px;width:1px;height:21px;background:#e3e3e3;"></div>
<div style="left:1055px;top:587px;width:17px;height:19px;background:#f0f0f0;"></div>
<div style="left:1055px;top:587px;width:17px;height:1px;background:#fff;"></div>
<div style="left:1055px;top:587px;width:1px;height:19px;background:#fff;"></div>
<div style="left:1056px;top:588px;width:15px;height:1px;background:#ececec;"></div>
<div style="left:1056px;top:588px;width:1px;height:17px;background:#ececec;"></div>
<div style="left:1055px;top:605px;width:17px;height:1px;background:#696969;"></div>
<div style="left:1071px;top:587px;width:1px;height:19px;background:#696969;"></div>
<div style="left:1056px;top:604px;width:15px;height:1px;background:#a0a0a0;"></div>
<div style="left:1070px;top:588px;width:1px;height:17px;background:#a0a0a0;"></div>
<svg style="left:1060px;top:595px" width="7" height="4" viewBox="0 0 7 4" shape-rendering="crispEdges"><rect x="0" y="0" width="7" height="1" fill="#000"/><rect x="1" y="1" width="5" height="1" fill="#000"/><rect x="2" y="2" width="3" height="1" fill="#000"/><rect x="3" y="3" width="1" height="1" fill="#000"/></svg>
<span class="t" style="left:954.00px;top:590px;font-size:13px;color:#000;transform:scaleX(0.9733);">Day</span>
<span class="t" style="left:900.00px;top:562px;font-size:13px;color:#000;transform:scaleX(0.8938);">Quantity:</span>
<div style="left:900px;top:576px;width:9px;height:1px;background:#000;"></div>
<span class="t" style="left:874.00px;top:588px;font-size:13px;color:#000;transform:scaleX(0.9463);">TimeInForce:</span>
<div style="left:873px;top:609px;width:201px;height:25px;background:#f0f0f0;"></div>
<div style="left:873px;top:609px;width:201px;height:1px;background:#a0a0a0;"></div>
<div style="left:873px;top:609px;width:1px;height:25px;background:#a0a0a0;"></div>
<div style="left:874px;top:610px;width:199px;height:1px;background:#696969;"></div>
<div style="left:874px;top:610px;width:1px;height:23px;background:#696969;"></div>
<div style="left:873px;top:633px;width:201px;height:1px;background:#fff;"></div>
<div style="left:1073px;top:609px;width:1px;height:25px;background:#fff;"></div>
<div style="left:874px;top:632px;width:199px;height:1px;background:#e3e3e3;"></div>
<div style="left:1072px;top:610px;width:1px;height:23px;background:#e3e3e3;"></div>
<span class="t" style="left:876.00px;top:613px;font-size:13px;color:#808080;transform:scaleX(0.9485);">00:00:00</span>
<div style="left:915px;top:637px;width:39px;height:38px;background:#80ff80;"></div>
<div style="left:915px;top:637px;width:39px;height:1px;background:#fff;"></div>
<div style="left:915px;top:637px;width:1px;height:38px;background:#fff;"></div>
<div style="left:916px;top:638px;width:37px;height:1px;background:#ececec;"></div>
<div style="left:916px;top:638px;width:1px;height:36px;background:#ececec;"></div>
<div style="left:915px;top:674px;width:39px;height:1px;background:#696969;"></div>
<div style="left:953px;top:637px;width:1px;height:38px;background:#696969;"></div>
<div style="left:916px;top:673px;width:37px;height:1px;background:#a0a0a0;"></div>
<div style="left:952px;top:638px;width:1px;height:36px;background:#a0a0a0;"></div>
<span class="t" style="left:923.60px;top:650px;font-size:11px;color:#000;font-weight:bold;transform:scaleX(0.9387);">BUY</span>
<div style="left:1001px;top:637px;width:39px;height:38px;background:#ff8080;"></div>
<div style="left:1001px;top:637px;width:39px;height:1px;background:#fff;"></div>
<div style="left:1001px;top:637px;width:1px;height:38px;background:#fff;"></div>
<div style="left:1002px;top:638px;width:37px;height:1px;background:#ececec;"></div>
<div style="left:1002px;top:638px;width:1px;height:36px;background:#ececec;"></div>
<div style="left:1001px;top:674px;width:39px;height:1px;background:#696969;"></div>
<div style="left:1039px;top:637px;width:1px;height:38px;background:#696969;"></div>
<div style="left:1002px;top:673px;width:37px;height:1px;background:#a0a0a0;"></div>
<div style="left:1038px;top:638px;width:1px;height:36px;background:#a0a0a0;"></div>
<span class="t" style="left:1007.10px;top:650px;font-size:11px;color:#000;font-weight:bold;transform:scaleX(0.9533);">SELL</span>
<div style="left:1089px;top:178px;width:282px;height:412px;background:#e1e1ca;"></div>
<div style="left:1089px;top:590px;width:282px;height:404px;background:#c0d0d8;"></div>
<div style="left:1089px;top:198px;width:280px;height:1px;background:#969696;"></div>
<div style="left:1089px;top:215px;width:280px;height:1px;background:#969696;"></div>
<div style="left:1089px;top:232px;width:280px;height:1px;background:#969696;"></div>
<div style="left:1089px;top:249px;width:280px;height:1px;background:#969696;"></div>
<div style="left:1089px;top:266px;width:280px;height:1px;background:#969696;"></div>
<div style="left:1089px;top:283px;width:280px;height:1px;background:#969696;"></div>
<div style="left:1089px;top:300px;width:280px;height:1px;background:#969696;"></div>
<div style="left:1089px;top:317px;width:280px;height:1px;background:#969696;"></div>
<div style="left:1089px;top:334px;width:280px;height:1px;background:#969696;"></div>
<div style="left:1089px;top:351px;width:280px;height:1px;background:#969696;"></div>
<div style="left:1089px;top:368px;width:280px;height:1px;background:#969696;"></div>
<div style="left:1089px;top:385px;width:280px;height:1px;background:#969696;"></div>
<div style="left:1089px;top:402px;width:280px;height:1px;background:#969696;"></div>
<div style="left:1089px;top:419px;width:280px;height:1px;background:#969696;"></div>
<div style="left:1089px;top:436px;width:280px;height:1px;background:#969696;"></div>
<div style="left:1089px;top:453px;width:280px;height:1px;background:#969696;"></div>
<div style="left:1089px;top:470px;width:280px;height:1px;background:#969696;"></div>
<div style="left:1089px;top:487px;width:280px;height:1px;background:#969696;"></div>
<div style="left:1089px;top:504px;width:280px;height:1px;background:#969696;"></div>
<div style="left:1089px;top:521px;width:280px;height:1px;background:#969696;"></div>
<div style="left:1089px;top:539px;width:280px;height:1px;background:#969696;"></div>
<div style="left:1089px;top:556px;width:280px;height:1px;background:#969696;"></div>
<div style="left:1089px;top:573px;width:280px;height:1px;background:#969696;"></div>
<div style="left:1089px;top:607px;width:280px;height:1px;background:#969696;"></div>
<div style="left:1089px;top:624px;width:280px;height:1px;background:#969696;"></div>
<div style="left:1089px;top:641px;width:280px;height:1px;background:#969696;"></div>
<div style="left:1089px;top:658px;width:280px;height:1px;background:#969696;"></div>
<div style="left:1089px;top:675px;width:280px;height:1px;background:#969696;"></div>
<div style="left:1089px;top:692px;width:280px;height:1px;background:#969696;"></div>
<div style="left:1089px;top:709px;width:280px;height:1px;background:#969696;"></div>
<div style="left:1089px;top:726px;width:280px;height:1px;background:#969696;"></div>
<div style="left:1089px;top:743px;width:280px;height:1px;background:#969696;"></div>
<div style="left:1089px;top:760px;width:280px;height:1px;background:#969696;"></div>
<div style="left:1089px;top:777px;width:280px;height:1px;background:#969696;"></div>
<div style="left:1089px;top:794px;width:280px;height:1px;background:#969696;"></div>
<div style="left:1089px;top:811px;width:280px;height:1px;background:#969696;"></div>
<div style="left:1089px;top:828px;width:280px;height:1px;background:#969696;"></div>
<div style="left:1089px;top:845px;width:280px;height:1px;background:#969696;"></div>
<div style="left:1089px;top:862px;width:280px;height:1px;background:#969696;"></div>
<div style="left:1089px;top:879px;width:280px;height:1px;background:#969696;"></div>
<div style="left:1089px;top:896px;width:280px;height:1px;background:#969696;"></div>
<div style="left:1089px;top:913px;width:280px;height:1px;background:#969696;"></div>
<div style="left:1089px;top:930px;width:280px;height:1px;background:#969696;"></div>
<div style="left:1089px;top:947px;width:280px;height:1px;background:#969696;"></div>
<div style="left:1089px;top:965px;width:280px;height:1px;background:#969696;"></div>
<div style="left:1089px;top:982px;width:280px;height:1px;background:#969696;"></div>
<div style="left:1089px;top:590px;width:167px;height:1px;background:#969696;"></div>
<span class="t" style="left:1298.70px;top:201px;font-size:12px;color:#000;transform:scaleX(0.9258);">0.230</span>
<span class="t" style="left:1298.70px;top:218px;font-size:12px;color:#000;transform:scaleX(0.9258);">0.220</span>
<span class="t" style="left:1298.70px;top:235px;font-size:12px;color:#000;transform:scaleX(0.9258);">0.210</span>
<span class="t" style="left:1298.70px;top:252px;font-size:12px;color:#000;transform:scaleX(0.9258);">0.200</span>
<span class="t" style="left:1298.70px;top:269px;font-size:12px;color:#000;transform:scaleX(0.9258);">0.190</span>
<span class="t" style="left:1298.70px;top:286px;font-size:12px;color:#000;transform:scaleX(0.9258);">0.180</span>
<span class="t" style="left:1298.70px;top:303px;font-size:12px;color:#000;transform:scaleX(0.9258);">0.170</span>
<span class="t" style="left:1298.70px;top:320px;font-size:12px;color:#000;transform:scaleX(0.9258);">0.160</span>
<span class="t" style="left:1298.70px;top:337px;font-size:12px;color:#000;transform:scaleX(0.9258);">0.150</span>
<span class="t" style="left:1298.70px;top:354px;font-size:12px;color:#000;transform:scaleX(0.9258);">0.140</span>
<span class="t" style="left:1298.70px;top:371px;font-size:12px;color:#000;transform:scaleX(0.9258);">0.130</span>
<span class="t" style="left:1298.70px;top:388px;font-size:12px;color:#000;transform:scaleX(0.9258);">0.120</span>
<span class="t" style="left:1298.70px;top:405px;font-size:12px;color:#000;transform:scaleX(0.9541);">0.110</span>
<span class="t" style="left:1298.70px;top:422px;font-size:12px;color:#000;transform:scaleX(0.9258);">0.100</span>
<span class="t" style="left:1298.70px;top:439px;font-size:12px;color:#000;transform:scaleX(0.9258);">0.090</span>
<span class="t" style="left:1298.70px;top:456px;font-size:12px;color:#000;transform:scaleX(0.9258);">0.080</span>
<span class="t" style="left:1298.70px;top:473px;font-size:12px;color:#000;transform:scaleX(0.9258);">0.070</span>
<span class="t" style="left:1298.70px;top:490px;font-size:12px;color:#000;transform:scaleX(0.9258);">0.060</span>
<span class="t" style="left:1298.70px;top:507px;font-size:12px;color:#000;transform:scaleX(0.9258);">0.050</span>
<span class="t" style="left:1298.70px;top:524px;font-size:12px;color:#000;transform:scaleX(0.9258);">0.040</span>
<span class="t" style="left:1298.70px;top:542px;font-size:12px;color:#000;transform:scaleX(0.9258);">0.030</span>
<span class="t" style="left:1298.70px;top:559px;font-size:12px;color:#000;transform:scaleX(0.9258);">0.020</span>
<span class="t" style="left:1298.70px;top:576px;font-size:12px;color:#000;transform:scaleX(0.9258);">0.010</span>
<span class="t" style="left:1298.70px;top:594px;font-size:12px;color:#000;transform:scaleX(0.9258);">0.000</span>
<span class="t" style="left:1296.10px;top:610px;font-size:12px;color:#000;transform:scaleX(0.9699);">-0.010</span>
<span class="t" style="left:1296.10px;top:627px;font-size:12px;color:#000;transform:scaleX(0.9699);">-0.020</span>
<span class="t" style="left:1296.10px;top:644px;font-size:12px;color:#000;transform:scaleX(0.9699);">-0.030</span>
<span class="t" style="left:1296.10px;top:661px;font-size:12px;color:#000;transform:scaleX(0.9699);">-0.040</span>
<span class="t" style="left:1296.10px;top:678px;font-size:12px;color:#000;transform:scaleX(0.9699);">-0.050</span>
<span class="t" style="left:1296.10px;top:695px;font-size:12px;color:#000;transform:scaleX(0.9699);">-0.060</span>
<span class="t" style="left:1296.10px;top:712px;font-size:12px;color:#000;transform:scaleX(0.9699);">-0.070</span>
<span class="t" style="left:1296.10px;top:729px;font-size:12px;color:#000;transform:scaleX(0.9699);">-0.080</span>
<span class="t" style="left:1296.10px;top:746px;font-size:12px;color:#000;transform:scaleX(0.9699);">-0.090</span>
<span class="t" style="left:1296.10px;top:763px;font-size:12px;color:#000;transform:scaleX(0.9699);">-0.100</span>
<span class="t" style="left:1296.10px;top:780px;font-size:12px;color:#000;transform:scaleX(0.9959);">-0.110</span>
<span class="t" style="left:1296.10px;top:797px;font-size:12px;color:#000;transform:scaleX(0.9699);">-0.120</span>
<span class="t" style="left:1296.10px;top:814px;font-size:12px;color:#000;transform:scaleX(0.9699);">-0.130</span>
<span class="t" style="left:1296.10px;top:831px;font-size:12px;color:#000;transform:scaleX(0.9699);">-0.140</span>
<span class="t" style="left:1296.10px;top:848px;font-size:12px;color:#000;transform:scaleX(0.9699);">-0.150</span>
<span class="t" style="left:1296.10px;top:865px;font-size:12px;color:#000;transform:scaleX(0.9699);">-0.160</span>
<span class="t" style="left:1296.10px;top:882px;font-size:12px;color:#000;transform:scaleX(0.9699);">-0.170</span>
<span class="t" style="left:1296.10px;top:899px;font-size:12px;color:#000;transform:scaleX(0.9699);">-0.180</span>
<span class="t" style="left:1296.10px;top:916px;font-size:12px;color:#000;transform:scaleX(0.9699);">-0.190</span>
<span class="t" style="left:1296.10px;top:933px;font-size:12px;color:#000;transform:scaleX(0.9699);">-0.200</span>
<span class="t" style="left:1296.10px;top:950px;font-size:12px;color:#000;transform:scaleX(0.9699);">-0.210</span>
<span class="t" style="left:1296.10px;top:968px;font-size:12px;color:#000;transform:scaleX(0.9699);">-0.220</span>
<span class="t" style="left:1296.10px;top:985px;font-size:12px;color:#000;transform:scaleX(0.9699);clip-path:inset(0 0 5px 0);">-0.230</span>
<div style="left:1256px;top:178px;width:1px;height:816px;background:#00a400;"></div>
<div style="left:1287px;top:178px;width:1px;height:816px;background:#00a400;"></div>
<div style="left:1338px;top:178px;width:1px;height:816px;background:#e00000;"></div>
<div style="left:1369px;top:178px;width:1px;height:816px;background:#e00000;"></div>
<div style="left:1288px;top:587px;width:50px;height:15px;background:#fff;"></div>
<div style="left:1256px;top:584px;width:115px;height:1px;background:#00a400;"></div>
<div style="left:1257px;top:602px;width:114px;height:1px;background:#e00000;"></div>
<span class="t" style="left:1298.90px;top:588px;font-size:12px;color:#000;transform:scaleX(0.9158);">0.003</span>
<div style="left:1267px;top:589px;width:2px;height:10px;background:#e00000;"></div>
<div style="left:1265.5px;top:591px;width:1.5px;height:2px;background:#e00000;"></div>
<div style="left:1271px;top:589px;width:12px;height:10px;background:#e00000;"></div>
<div style="left:1277px;top:599px;width:6px;height:17px;background:#e00000;"></div>
<div style="left:1273px;top:599px;width:1.5px;height:16px;background:#e00000;"></div>
<div style="left:1279px;top:610px;width:3px;height:1px;background:#f6b0b0;"></div>
<div style="left:1281px;top:611px;width:1px;height:2px;background:#f6b0b0;"></div>
<div style="left:1279px;top:613px;width:3px;height:1px;background:#f6b0b0;"></div>
<div style="left:1342px;top:587px;width:12px;height:10px;background:#00a800;"></div>
<div style="left:1343px;top:583px;width:4px;height:4px;background:#00a800;"></div>
<span class="t" style="left:1353.70px;top:586px;font-size:12px;color:#00a800;transform:scaleX(0.9889);">8</span>
<div style="left:1091px;top:179px;width:33px;height:14.5px;background:#fbfbfb;"></div>
<div style="left:1091px;top:193.5px;width:63px;height:14.5px;background:#fbfbfb;"></div>
<span class="t" style="left:1095.00px;top:179px;font-size:12px;color:#000;transform:scaleX(0.9590);">Qty:1</span>
<span class="t" style="left:1092.00px;top:194px;font-size:12px;color:#000;transform:scaleX(0.8891);">DPL: 0.000P</span>
<span class="t" style="left:1261.00px;top:182px;font-size:12px;color:#1fae1f;transform:scaleX(0.9817);">Buy</span>
<span class="t" style="left:1343.50px;top:182px;font-size:12px;color:#e00000;transform:scaleX(0.9295);">Sell</span>
</body></html>
